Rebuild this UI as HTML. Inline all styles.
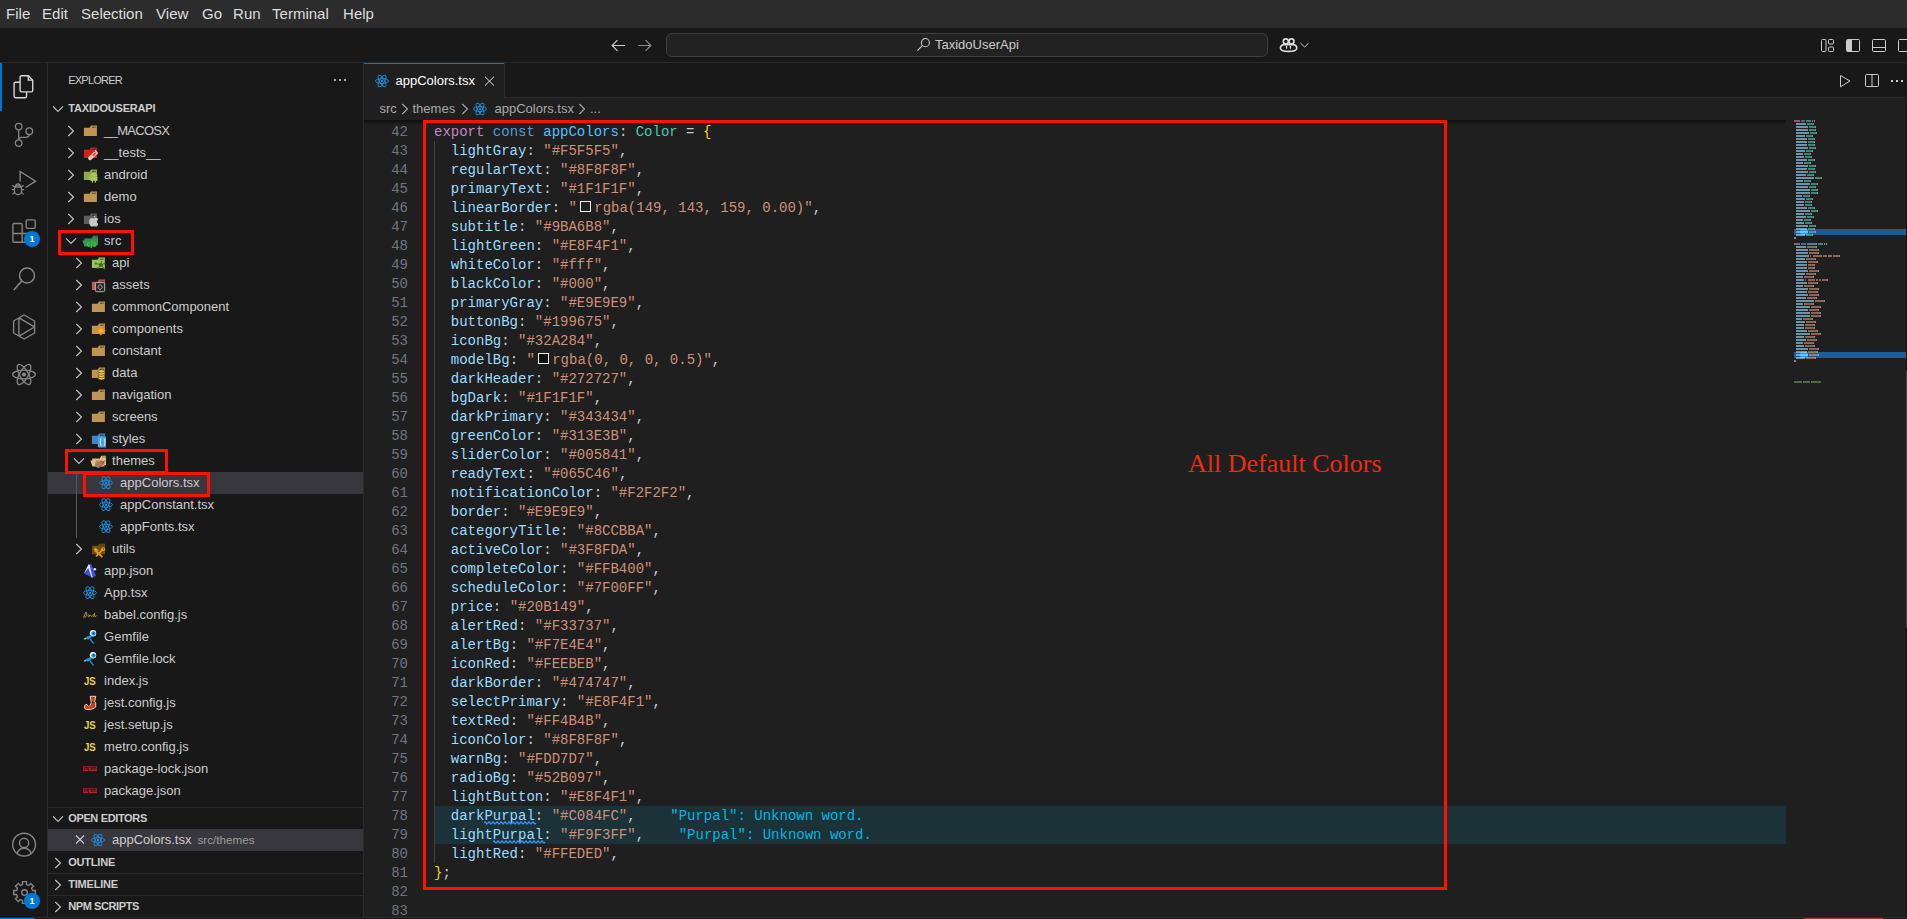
<!DOCTYPE html><html><head><meta charset="utf-8"><style>
html,body{margin:0;padding:0;width:1907px;height:919px;overflow:hidden;background:#181818;position:relative}
div,span{box-sizing:content-box}
.menu{position:absolute;top:5px;font:14px/18px "Liberation Sans",sans-serif;color:#dcdcdc;white-space:pre}
.ui{position:absolute;font-family:"Liberation Sans",sans-serif;line-height:18px;white-space:pre}
.b{font-weight:bold}
.rb{position:absolute;border:3px solid #ff1100}
.ln{position:absolute;left:364px;width:44px;text-align:right;font:14px/19px "Liberation Mono",monospace;color:#6e7681}
.code{position:absolute;left:434px;font:14px/19px "Liberation Mono",monospace;white-space:pre;color:#cccccc}
.sw{display:inline-block;box-sizing:border-box;width:11.2px;height:11.2px;border:1.4px solid #eeeeee;margin:0 3.4px 0 2.8px;vertical-align:0px}
</style></head><body><div style="position:absolute;left:0;top:0;width:1907px;height:28px;background:#2c2c2c"></div><div style="position:absolute;left:6.1px;top:3.70px;font:normal 15px/20px 'Liberation Sans',sans-serif;color:#dedede;letter-spacing:0px;white-space:pre;">File</div><div style="position:absolute;left:42.1px;top:3.70px;font:normal 15px/20px 'Liberation Sans',sans-serif;color:#dedede;letter-spacing:0px;white-space:pre;">Edit</div><div style="position:absolute;left:81.1px;top:3.70px;font:normal 15px/20px 'Liberation Sans',sans-serif;color:#dedede;letter-spacing:0px;white-space:pre;">Selection</div><div style="position:absolute;left:156.1px;top:3.70px;font:normal 15px/20px 'Liberation Sans',sans-serif;color:#dedede;letter-spacing:0px;white-space:pre;">View</div><div style="position:absolute;left:202.1px;top:3.70px;font:normal 15px/20px 'Liberation Sans',sans-serif;color:#dedede;letter-spacing:0px;white-space:pre;">Go</div><div style="position:absolute;left:233.1px;top:3.70px;font:normal 15px/20px 'Liberation Sans',sans-serif;color:#dedede;letter-spacing:0px;white-space:pre;">Run</div><div style="position:absolute;left:272.1px;top:3.70px;font:normal 15px/20px 'Liberation Sans',sans-serif;color:#dedede;letter-spacing:0px;white-space:pre;">Terminal</div><div style="position:absolute;left:343.1px;top:3.70px;font:normal 15px/20px 'Liberation Sans',sans-serif;color:#dedede;letter-spacing:0px;white-space:pre;">Help</div><div style="position:absolute;left:0;top:28px;width:1907px;height:34px;background:#181818;border-bottom:1px solid #2b2b2b"></div><svg style="position:absolute;left:610px;top:37px" width="17" height="17" viewBox="0 0 16 16"><path d="M2 8H14M7 3L2 8L7 13" fill="none" stroke="#cccccc" stroke-width="1.1"/></svg><svg style="position:absolute;left:636px;top:37px" width="17" height="17" viewBox="0 0 16 16"><path d="M2 8H14M9 3L14 8L9 13" fill="none" stroke="#8a8a8a" stroke-width="1.1"/></svg><div style="position:absolute;left:666px;top:33px;width:600px;height:22px;border:1px solid #3f3f3f;border-radius:6px;background:#222222"></div><svg style="position:absolute;left:916px;top:37px" width="15" height="15" viewBox="0 0 16 16"><circle cx="10" cy="6" r="4.3" fill="none" stroke="#cccccc" stroke-width="1.1"/><path d="M7 9L1.5 14.5" stroke="#cccccc" stroke-width="1.2"/></svg><div style="position:absolute;left:935px;top:34.99px;font:normal 13px/20px 'Liberation Sans',sans-serif;color:#cccccc;letter-spacing:0px;white-space:pre;">TaxidoUserApi</div><svg style="position:absolute;left:1279px;top:36px" width="19" height="17" viewBox="0 0 19 17"><circle cx="6.8" cy="5.4" r="2.5" fill="none" stroke="#dddddd" stroke-width="1.6"/><circle cx="12.5" cy="5.4" r="2.5" fill="none" stroke="#dddddd" stroke-width="1.6"/><path d="M4.2 8.8H15C16.7 9.3 17.8 10.5 17.8 12C17.8 14.5 14.2 15.4 9.6 15.4C5 15.4 1.4 14.5 1.4 12C1.4 10.5 2.5 9.3 4.2 8.8Z" fill="none" stroke="#dddddd" stroke-width="1.6"/><rect x="6.9" y="9.9" width="1.3" height="2.8" fill="#dddddd"/><rect x="10.8" y="9.9" width="1.3" height="2.8" fill="#dddddd"/></svg><svg style="position:absolute;left:1299px;top:40px" width="11" height="10" viewBox="0 0 11 10"><path d="M1.6 3.2L5.6 7L9.5 3.2" fill="none" stroke="#cccccc" stroke-width="1"/></svg><svg style="position:absolute;left:1820px;top:38px" width="15" height="14" viewBox="0 0 15 14"><rect x="1.5" y="1.5" width="4.5" height="12" rx="1" fill="none" stroke="#cccccc" stroke-width="1"/><rect x="8.5" y="1.5" width="5" height="4.5" rx="1" fill="none" stroke="#cccccc" stroke-width="1"/><rect x="8.5" y="9" width="5" height="4.5" rx="1" fill="none" stroke="#cccccc" stroke-width="1"/></svg><svg style="position:absolute;left:1845px;top:38px" width="16" height="14" viewBox="0 0 16 14"><rect x="1.5" y="1.5" width="13" height="12" rx="1" fill="none" stroke="#cccccc" stroke-width="1"/><path d="M2 2H7V13H2Z" fill="#cccccc"/></svg><svg style="position:absolute;left:1871px;top:38px" width="16" height="14" viewBox="0 0 16 14"><rect x="1.5" y="1.5" width="13" height="12" rx="1" fill="none" stroke="#cccccc" stroke-width="1"/><path d="M2 9.5H14" stroke="#cccccc" stroke-width="1"/></svg><svg style="position:absolute;left:1897px;top:38px" width="16" height="14" viewBox="0 0 16 14"><rect x="1.5" y="1.5" width="13" height="12" rx="1" fill="none" stroke="#cccccc" stroke-width="1"/><path d="M10.5 2V13" stroke="#cccccc" stroke-width="1"/></svg><div style="position:absolute;left:0;top:63px;width:47px;height:856px;background:#181818;border-right:1px solid #2b2b2b"></div><div style="position:absolute;left:0;top:63px;width:2px;height:48px;background:#0078d4"></div><svg style="position:absolute;left:12px;top:75px" width="24" height="25" viewBox="0 0 24 25"><path d="M9.5 0.8H16.3L20.7 5.2V15.5Q20.7 16.9 19.3 16.9H9.5Q8.1 16.9 8.1 15.5V2.2Q8.1 0.8 9.5 0.8Z" fill="none" stroke="#d7d7d7" stroke-width="1.4"/><path d="M16.3 0.8V5.2H20.7" fill="none" stroke="#d7d7d7" stroke-width="1.3"/><path d="M8.1 7.2H3.5Q2.1 7.2 2.1 8.6V21.3Q2.1 22.7 3.5 22.7H13.2Q14.6 22.7 14.6 21.3V16.9" fill="none" stroke="#d7d7d7" stroke-width="1.4"/></svg><svg style="position:absolute;left:13px;top:118px" width="22" height="30" viewBox="0 0 22 30"><circle cx="5.67" cy="8.6" r="3.3" fill="none" stroke="#868686" stroke-width="1.3"/><circle cx="5.67" cy="25.1" r="3.3" fill="none" stroke="#868686" stroke-width="1.3"/><circle cx="16.3" cy="13.2" r="3.3" fill="none" stroke="#868686" stroke-width="1.3"/><path d="M5.67 11.9V21.8M16.3 16.5C16.3 18.5 15 19.3 12.5 19.3H8.5C6.5 19.3 5.67 20.5 5.67 22" fill="none" stroke="#868686" stroke-width="1.3"/></svg><svg style="position:absolute;left:11px;top:170px" width="27" height="27" viewBox="0 0 27 27"><path d="M9.1 11.6V1.4L24.6 11.2L14.6 17.5" fill="none" stroke="#868686" stroke-width="1.4" stroke-linejoin="miter"/><ellipse cx="7" cy="20.2" rx="3.6" ry="4.5" fill="none" stroke="#868686" stroke-width="1.3"/><path d="M4.2 17.1Q4.6 13.8 7 13.8Q9.4 13.8 9.8 17.1M3.6 17.1H10.4M1.5 15.3L3.7 17.3M12.5 15.3L10.3 17.3M0.8 19.7H3.3M13.2 19.7H10.7M1.5 24.3L3.7 22.6M12.5 24.3L10.3 22.6" fill="none" stroke="#868686" stroke-width="1.3"/></svg><svg style="position:absolute;left:11px;top:218px" width="26" height="26" viewBox="0 0 26 26"><path d="M11.2 24.2V6.8Q11.2 5.5 9.9 5.5H3.2Q1.9 5.5 1.9 6.8V22.9Q1.9 24.2 3.2 24.2H19V15.5H1.9" fill="none" stroke="#868686" stroke-width="1.35"/><rect x="15.2" y="1.8" width="9" height="8.6" rx="1.4" fill="none" stroke="#868686" stroke-width="1.35"/></svg><div style="position:absolute;left:24px;top:231px;width:16px;height:16px;border-radius:8px;background:#0078d4;color:#fff;font:bold 9px/16px 'Liberation Sans',sans-serif;text-align:center">1</div><svg style="position:absolute;left:12px;top:266px" width="25" height="26" viewBox="0 0 25 26"><circle cx="15" cy="9.5" r="7.5" fill="none" stroke="#868686" stroke-width="1.5"/><path d="M9.8 15L1.8 24" stroke="#868686" stroke-width="1.6"/></svg><svg style="position:absolute;left:12px;top:314px" width="25" height="27" viewBox="0 0 25 27"><path d="M12.1 1L22.6 7V19L12.1 25L1.6 19V7Z" fill="none" stroke="#868686" stroke-width="1.35" stroke-linejoin="round"/><path d="M6.9 3.9V22.1M6.9 3.9L22.5 12.8M7.5 21.8L22.5 13" fill="none" stroke="#868686" stroke-width="1.35"/></svg><svg style="position:absolute;left:11px;top:362px" width="26" height="25" viewBox="-13 -12.5 26 25"><g fill="none" stroke="#868686" stroke-width="1.25"><ellipse rx="11.4" ry="4.3"/><ellipse rx="11.4" ry="4.3" transform="rotate(60)"/><ellipse rx="11.4" ry="4.3" transform="rotate(120)"/></g><circle r="2.1" fill="#868686"/></svg><svg style="position:absolute;left:11px;top:832px" width="26" height="26" viewBox="0 0 26 26"><circle cx="13.1" cy="12.6" r="11.4" fill="none" stroke="#868686" stroke-width="1.4"/><circle cx="13.1" cy="10.9" r="4.6" fill="none" stroke="#868686" stroke-width="1.4"/><path d="M5.9 21.5C7.2 17.8 9.8 16.2 13.1 16.2C16.4 16.2 19 17.8 20.3 21.5" fill="none" stroke="#868686" stroke-width="1.4"/></svg><svg style="position:absolute;left:11.6px;top:880.2px" width="25" height="25" viewBox="0 0 25 25"><path d="M10.52 4.54 L10.50 1.68 L14.50 1.68 L14.48 4.54 L16.72 5.47 L18.73 3.43 L21.57 6.27 L19.53 8.28 L20.46 10.52 L23.32 10.50 L23.32 14.50 L20.46 14.48 L19.53 16.72 L21.57 18.73 L18.73 21.57 L16.72 19.53 L14.48 20.46 L14.50 23.32 L10.50 23.32 L10.52 20.46 L8.28 19.53 L6.27 21.57 L3.43 18.73 L5.47 16.72 L4.54 14.48 L1.68 14.50 L1.68 10.50 L4.54 10.52 L5.47 8.28 L3.43 6.27 L6.27 3.43 L8.28 5.47Z" fill="none" stroke="#868686" stroke-width="1.35" stroke-linejoin="miter"/><circle cx="12.5" cy="12.5" r="2.8" fill="none" stroke="#868686" stroke-width="1.35"/></svg><div style="position:absolute;left:24px;top:893px;width:16px;height:16px;border-radius:8px;background:#0078d4;color:#fff;font:bold 9px/16px 'Liberation Sans',sans-serif;text-align:center">1</div><div style="position:absolute;left:48px;top:63px;width:315px;height:856px;background:#181818;border-right:1px solid #2b2b2b"></div><div style="position:absolute;left:68.3px;top:70.19px;font:normal 11px/20px 'Liberation Sans',sans-serif;color:#cccccc;letter-spacing:-0.8px;white-space:pre;">EXPLORER</div><svg style="position:absolute;left:332px;top:75px" width="16" height="10" viewBox="0 0 16 10"><circle cx="3" cy="5" r="1.1" fill="#cccccc"/><circle cx="8" cy="5" r="1.1" fill="#cccccc"/><circle cx="13" cy="5" r="1.1" fill="#cccccc"/></svg><svg style="position:absolute;left:50px;top:101.3px" width="16" height="16" viewBox="0 0 16 16"><path d="M3 5.4L8 10.4L13 5.4" fill="none" stroke="#c5c5c5" stroke-width="1.1"/></svg><div style="position:absolute;left:68.3px;top:98.19px;font:bold 11px/20px 'Liberation Sans',sans-serif;color:#cccccc;letter-spacing:-0.2px;white-space:pre;">TAXIDOUSERAPI</div><svg style="position:absolute;left:63.3px;top:123px" width="16" height="16" viewBox="0 0 16 16"><path d="M5.3 3L10.5 8L5.3 13" fill="none" stroke="#c5c5c5" stroke-width="1.1"/></svg><div style="position:absolute;left:82px;top:122px;width:16px;height:16px"><svg width="16" height="18" viewBox="0 0 16 18" style="position:absolute;left:0;top:0"><g transform="translate(1.9,1.6)"><path d="M0 4.25H5.7L7.1 2H13V12.5H0Z" fill="#c09553"/><rect x="8" y="3.1" width="4" height="1.1" fill="#1a1a1a" opacity=".55"/></g></svg></div><div style="position:absolute;left:104.1px;top:121.09px;font:normal 13px/20px 'Liberation Sans',sans-serif;color:#cccccc;letter-spacing:-0.7px;white-space:pre;">__MACOSX</div><svg style="position:absolute;left:63.3px;top:145px" width="16" height="16" viewBox="0 0 16 16"><path d="M5.3 3L10.5 8L5.3 13" fill="none" stroke="#c5c5c5" stroke-width="1.1"/></svg><div style="position:absolute;left:82px;top:144px;width:16px;height:16px"><svg width="16" height="18" viewBox="0 0 16 18" style="position:absolute;left:0;top:0"><g transform="translate(1.9,1.6)"><path d="M0 4.25H5.7L7.1 2H13V12.5H0Z" fill="#c4291c"/><rect x="8" y="3.1" width="4" height="1.1" fill="#1a1a1a" opacity=".55"/><g transform="rotate(-42 8.6 10.2)"><rect x="3.2" y="8.4" width="11" height="3.8" rx="1.9" fill="#f5c4c4"/><rect x="9" y="9.4" width="4" height="1.8" fill="#d84a3a"/><rect x="13.6" y="7.8" width="1.2" height="5" fill="#f5c4c4"/></g></g></svg></div><div style="position:absolute;left:104.1px;top:143.09px;font:normal 13px/20px 'Liberation Sans',sans-serif;color:#cccccc;letter-spacing:0px;white-space:pre;">__tests__</div><svg style="position:absolute;left:63.3px;top:167px" width="16" height="16" viewBox="0 0 16 16"><path d="M5.3 3L10.5 8L5.3 13" fill="none" stroke="#c5c5c5" stroke-width="1.1"/></svg><div style="position:absolute;left:82px;top:166px;width:16px;height:16px"><svg width="16" height="18" viewBox="0 0 16 18" style="position:absolute;left:0;top:0"><g transform="translate(1.9,1.6)"><path d="M0 4.25H5.7L7.1 2H13V12.5H0Z" fill="#93ab4c"/><rect x="8" y="3.1" width="4" height="1.1" fill="#1a1a1a" opacity=".55"/><path d="M6.5 8.6A3.5 3.5 0 0 1 13.5 8.6Z" fill="#aac65e"/><rect x="6.5" y="9.1" width="7" height="4.2" fill="#aac65e"/><rect x="5" y="9.1" width="1.1" height="3.2" rx=".5" fill="#aac65e"/><rect x="13.9" y="9.1" width="1.1" height="3.2" rx=".5" fill="#aac65e"/><rect x="7.9" y="13" width="1.3" height="2" fill="#aac65e"/><rect x="10.8" y="13" width="1.3" height="2" fill="#aac65e"/></g></svg></div><div style="position:absolute;left:104.1px;top:165.09px;font:normal 13px/20px 'Liberation Sans',sans-serif;color:#cccccc;letter-spacing:0px;white-space:pre;">android</div><svg style="position:absolute;left:63.3px;top:189px" width="16" height="16" viewBox="0 0 16 16"><path d="M5.3 3L10.5 8L5.3 13" fill="none" stroke="#c5c5c5" stroke-width="1.1"/></svg><div style="position:absolute;left:82px;top:188px;width:16px;height:16px"><svg width="16" height="18" viewBox="0 0 16 18" style="position:absolute;left:0;top:0"><g transform="translate(1.9,1.6)"><path d="M0 4.25H5.7L7.1 2H13V12.5H0Z" fill="#c09553"/><rect x="8" y="3.1" width="4" height="1.1" fill="#1a1a1a" opacity=".55"/></g></svg></div><div style="position:absolute;left:104.1px;top:187.09px;font:normal 13px/20px 'Liberation Sans',sans-serif;color:#cccccc;letter-spacing:0px;white-space:pre;">demo</div><svg style="position:absolute;left:63.3px;top:211px" width="16" height="16" viewBox="0 0 16 16"><path d="M5.3 3L10.5 8L5.3 13" fill="none" stroke="#c5c5c5" stroke-width="1.1"/></svg><div style="position:absolute;left:82px;top:210px;width:16px;height:16px"><svg width="16" height="18" viewBox="0 0 16 18" style="position:absolute;left:0;top:0"><g transform="translate(1.9,1.6)"><path d="M0 4.25H5.7L7.1 2H13V12.5H0Z" fill="#5e5e5e"/><rect x="8" y="3.1" width="4" height="1.1" fill="#1a1a1a" opacity=".55"/><path d="M9.6 6.8C10.5 6.8 11 6.2 12 6.2C13.2 6.2 14 7 14.3 7.8C13.2 8.4 12.8 9.4 13 10.5C13.2 11.5 13.8 12 14.4 12.3C14 13.5 13 15 12 15C11.2 15 10.8 14.6 10 14.6C9.2 14.6 8.7 15 8 15C6.8 15 5.2 12.5 5.2 10.3C5.2 8 6.5 6.5 8 6.5C8.7 6.5 9.1 6.8 9.6 6.8Z" fill="#c9c9c9"/><path d="M9.8 6.2C9.8 5 10.6 4.2 11.6 4C11.6 5.2 10.8 6 9.8 6.2Z" fill="#c9c9c9"/></g></svg></div><div style="position:absolute;left:104.1px;top:209.09px;font:normal 13px/20px 'Liberation Sans',sans-serif;color:#cccccc;letter-spacing:0px;white-space:pre;">ios</div><svg style="position:absolute;left:62.900000000000006px;top:233.2px" width="16" height="16" viewBox="0 0 16 16"><path d="M3 5.4L8 10.4L13 5.4" fill="none" stroke="#c5c5c5" stroke-width="1.1"/></svg><div style="position:absolute;left:82px;top:232px;width:16px;height:16px"><svg width="16" height="18" viewBox="0 0 16 18"><path d="M2.3 6.6H9.8L11.2 3.8H17V13H2.3Z" fill="#3b8f4e"/><rect x="12.2" y="4.6" width="3.7" height="0.9" fill="#1a1a1a" opacity=".5"/><path d="M0.3 8.5H15.5L14.3 14.6H2.5Z" fill="#3d9552"/><path d="M7.2 10.2L4.9 12.5L7.2 14.8M11.8 10.2L14 12.5L11.8 14.8M10 8.8L9.1 16.2" fill="none" stroke="#33c533" stroke-width="1.3"/></svg></div><div style="position:absolute;left:104.1px;top:231.09px;font:normal 13px/20px 'Liberation Sans',sans-serif;color:#cccccc;letter-spacing:0px;white-space:pre;">src</div><svg style="position:absolute;left:71.3px;top:255px" width="16" height="16" viewBox="0 0 16 16"><path d="M5.3 3L10.5 8L5.3 13" fill="none" stroke="#c5c5c5" stroke-width="1.1"/></svg><div style="position:absolute;left:90px;top:254px;width:16px;height:16px"><svg width="16" height="18" viewBox="0 0 16 18" style="position:absolute;left:0;top:0"><g transform="translate(1.9,1.6)"><path d="M0 4.25H5.7L7.1 2H13V12.5H0Z" fill="#9dbf5f"/><rect x="8" y="3.1" width="4" height="1.1" fill="#1a1a1a" opacity=".55"/><path d="M9 9.3L3.8 7.9M9 9.3L9.5 5.3M9 9.3L12.8 7.9M9 9.3L12.4 13.1M9 9.3L6.1 12.7" stroke="#3f6e1a" stroke-width="0.9"/><circle cx="9" cy="9.3" r="2" fill="#3f6e1a"/><circle cx="3.8" cy="7.9" r="1" fill="#3f6e1a"/><circle cx="12.8" cy="7.9" r="0.9" fill="#3f6e1a"/><circle cx="12.4" cy="13.1" r="1.1" fill="#3f6e1a"/><circle cx="6.1" cy="12.7" r="0.9" fill="#3f6e1a"/></g></svg></div><div style="position:absolute;left:112.1px;top:253.09px;font:normal 13px/20px 'Liberation Sans',sans-serif;color:#cccccc;letter-spacing:0px;white-space:pre;">api</div><svg style="position:absolute;left:71.3px;top:277px" width="16" height="16" viewBox="0 0 16 16"><path d="M5.3 3L10.5 8L5.3 13" fill="none" stroke="#c5c5c5" stroke-width="1.1"/></svg><div style="position:absolute;left:90px;top:276px;width:16px;height:16px"><svg width="16" height="18" viewBox="0 0 16 18" style="position:absolute;left:0;top:0"><g transform="translate(1.9,1.6)"><path d="M0 4.25H5.7L7.1 2H13V12.5H0Z" fill="#c25a5a"/><rect x="8" y="3.1" width="4" height="1.1" fill="#1a1a1a" opacity=".55"/><rect x="3.5" y="5" width="9.3" height="9.1" rx="1.2" fill="#2b2b2b" stroke="#bdbdbd" stroke-width="0.9"/><path d="M8.2 6.8L10.6 9.5L8.2 12.2L5.8 9.5Z" fill="none" stroke="#bdbdbd" stroke-width="0.8"/></g></svg></div><div style="position:absolute;left:112.1px;top:275.09px;font:normal 13px/20px 'Liberation Sans',sans-serif;color:#cccccc;letter-spacing:0px;white-space:pre;">assets</div><svg style="position:absolute;left:71.3px;top:299px" width="16" height="16" viewBox="0 0 16 16"><path d="M5.3 3L10.5 8L5.3 13" fill="none" stroke="#c5c5c5" stroke-width="1.1"/></svg><div style="position:absolute;left:90px;top:298px;width:16px;height:16px"><svg width="16" height="18" viewBox="0 0 16 18" style="position:absolute;left:0;top:0"><g transform="translate(1.9,1.6)"><path d="M0 4.25H5.7L7.1 2H13V12.5H0Z" fill="#c09553"/><rect x="8" y="3.1" width="4" height="1.1" fill="#1a1a1a" opacity=".55"/></g></svg></div><div style="position:absolute;left:112.1px;top:297.09px;font:normal 13px/20px 'Liberation Sans',sans-serif;color:#cccccc;letter-spacing:0px;white-space:pre;">commonComponent</div><svg style="position:absolute;left:71.3px;top:321px" width="16" height="16" viewBox="0 0 16 16"><path d="M5.3 3L10.5 8L5.3 13" fill="none" stroke="#c5c5c5" stroke-width="1.1"/></svg><div style="position:absolute;left:90px;top:320px;width:16px;height:16px"><svg width="16" height="18" viewBox="0 0 16 18" style="position:absolute;left:0;top:0"><g transform="translate(1.9,1.6)"><path d="M0 4.25H5.7L7.1 2H13V12.5H0Z" fill="#c09553"/><rect x="8" y="3.1" width="4" height="1.1" fill="#1a1a1a" opacity=".55"/><path d="M9 4.5L13.8 9.2L9 14L4.2 9.2Z" fill="#f0891e"/><path d="M9 6.5L11.7 9.2L9 11.9L6.3 9.2Z" fill="#f9b53a"/></g></svg></div><div style="position:absolute;left:112.1px;top:319.09px;font:normal 13px/20px 'Liberation Sans',sans-serif;color:#cccccc;letter-spacing:0px;white-space:pre;">components</div><svg style="position:absolute;left:71.3px;top:343px" width="16" height="16" viewBox="0 0 16 16"><path d="M5.3 3L10.5 8L5.3 13" fill="none" stroke="#c5c5c5" stroke-width="1.1"/></svg><div style="position:absolute;left:90px;top:342px;width:16px;height:16px"><svg width="16" height="18" viewBox="0 0 16 18" style="position:absolute;left:0;top:0"><g transform="translate(1.9,1.6)"><path d="M0 4.25H5.7L7.1 2H13V12.5H0Z" fill="#c09553"/><rect x="8" y="3.1" width="4" height="1.1" fill="#1a1a1a" opacity=".55"/></g></svg></div><div style="position:absolute;left:112.1px;top:341.09px;font:normal 13px/20px 'Liberation Sans',sans-serif;color:#cccccc;letter-spacing:0px;white-space:pre;">constant</div><svg style="position:absolute;left:71.3px;top:365px" width="16" height="16" viewBox="0 0 16 16"><path d="M5.3 3L10.5 8L5.3 13" fill="none" stroke="#c5c5c5" stroke-width="1.1"/></svg><div style="position:absolute;left:90px;top:364px;width:16px;height:16px"><svg width="16" height="18" viewBox="0 0 16 18" style="position:absolute;left:0;top:0"><g transform="translate(1.9,1.6)"><path d="M0 4.25H5.7L7.1 2H13V12.5H0Z" fill="#c09553"/><rect x="8" y="3.1" width="4" height="1.1" fill="#1a1a1a" opacity=".55"/><g fill="#f0cf50" stroke="#1a1a1a" stroke-width="0.5"><ellipse cx="9.6" cy="12.6" rx="3.3" ry="1.7"/><ellipse cx="9.6" cy="10.3" rx="3.3" ry="1.7"/><ellipse cx="9.6" cy="8" rx="3.3" ry="1.7"/><ellipse cx="9.6" cy="5.7" rx="3.3" ry="1.6"/></g></g></svg></div><div style="position:absolute;left:112.1px;top:363.09px;font:normal 13px/20px 'Liberation Sans',sans-serif;color:#cccccc;letter-spacing:0px;white-space:pre;">data</div><svg style="position:absolute;left:71.3px;top:387px" width="16" height="16" viewBox="0 0 16 16"><path d="M5.3 3L10.5 8L5.3 13" fill="none" stroke="#c5c5c5" stroke-width="1.1"/></svg><div style="position:absolute;left:90px;top:386px;width:16px;height:16px"><svg width="16" height="18" viewBox="0 0 16 18" style="position:absolute;left:0;top:0"><g transform="translate(1.9,1.6)"><path d="M0 4.25H5.7L7.1 2H13V12.5H0Z" fill="#c09553"/><rect x="8" y="3.1" width="4" height="1.1" fill="#1a1a1a" opacity=".55"/></g></svg></div><div style="position:absolute;left:112.1px;top:385.09px;font:normal 13px/20px 'Liberation Sans',sans-serif;color:#cccccc;letter-spacing:0px;white-space:pre;">navigation</div><svg style="position:absolute;left:71.3px;top:409px" width="16" height="16" viewBox="0 0 16 16"><path d="M5.3 3L10.5 8L5.3 13" fill="none" stroke="#c5c5c5" stroke-width="1.1"/></svg><div style="position:absolute;left:90px;top:408px;width:16px;height:16px"><svg width="16" height="18" viewBox="0 0 16 18" style="position:absolute;left:0;top:0"><g transform="translate(1.9,1.6)"><path d="M0 4.25H5.7L7.1 2H13V12.5H0Z" fill="#c09553"/><rect x="8" y="3.1" width="4" height="1.1" fill="#1a1a1a" opacity=".55"/></g></svg></div><div style="position:absolute;left:112.1px;top:407.09px;font:normal 13px/20px 'Liberation Sans',sans-serif;color:#cccccc;letter-spacing:0px;white-space:pre;">screens</div><svg style="position:absolute;left:71.3px;top:431px" width="16" height="16" viewBox="0 0 16 16"><path d="M5.3 3L10.5 8L5.3 13" fill="none" stroke="#c5c5c5" stroke-width="1.1"/></svg><div style="position:absolute;left:90px;top:430px;width:16px;height:16px"><svg width="16" height="18" viewBox="0 0 16 18" style="position:absolute;left:0;top:0"><g transform="translate(1.9,1.6)"><path d="M0 4.25H5.7L7.1 2H13V12.5H0Z" fill="#3f87c6"/><rect x="8" y="3.1" width="4" height="1.1" fill="#1a1a1a" opacity=".55"/><rect x="6" y="5" width="9.5" height="11" rx="1" fill="#4ea0e6"/><path d="M9.5 7C8.5 7 8.7 8 8.7 9C8.7 10 8 10.5 8 10.5C8 10.5 8.7 11 8.7 12C8.7 13 8.5 14 9.5 14M12 7C13 7 12.8 8 12.8 9C12.8 10 13.5 10.5 13.5 10.5C13.5 10.5 12.8 11 12.8 12C12.8 13 13 14 12 14" stroke="#ffffff" stroke-width="0.9" fill="none"/></g></svg></div><div style="position:absolute;left:112.1px;top:429.09px;font:normal 13px/20px 'Liberation Sans',sans-serif;color:#cccccc;letter-spacing:0px;white-space:pre;">styles</div><svg style="position:absolute;left:70.9px;top:453.2px" width="16" height="16" viewBox="0 0 16 16"><path d="M3 5.4L8 10.4L13 5.4" fill="none" stroke="#c5c5c5" stroke-width="1.1"/></svg><div style="position:absolute;left:90px;top:452px;width:16px;height:16px"><svg width="16" height="18" viewBox="0 0 16 18"><path d="M2.3 6.6H9.8L11.2 3.8H17V13H2.3Z" fill="#e2b888"/><rect x="12.2" y="4.6" width="3.7" height="0.9" fill="#1a1a1a" opacity=".5"/><path d="M0.3 8.5H15.5L14.3 14.6H2.5Z" fill="#e6bd8c"/><path d="M5.5 10C5.5 8.8 7 8.5 9 8.5C12 8.5 14.5 9 14.5 11C14.5 13.5 12 14.3 10.5 14.3L9.5 16L7 15.5L5 14Z" fill="#b87850"/><circle cx="6.5" cy="11.2" r="0.9" fill="#55c34a"/><circle cx="6.5" cy="13.2" r="0.9" fill="#3b8be0"/><circle cx="8" cy="9.5" r="0.8" fill="#d9a73a"/><circle cx="11.3" cy="9.6" r="0.8" fill="#d94a2a"/><circle cx="9.8" cy="15" r="0.8" fill="#3030e0"/><path d="M12 11.5L15 8.5" stroke="#2a3f5f" stroke-width="1"/></svg></div><div style="position:absolute;left:112.1px;top:451.09px;font:normal 13px/20px 'Liberation Sans',sans-serif;color:#cccccc;letter-spacing:0px;white-space:pre;">themes</div><div style="position:absolute;left:48px;top:472px;width:315px;height:22px;background:#37373d"></div><div style="position:absolute;left:98px;top:474px;width:16px;height:16px"><svg width="16" height="16" viewBox="-8 -8.7 16 16"><g fill="none" stroke="#2386d0" stroke-width="1"><ellipse rx="6.5" ry="2.45"/><ellipse rx="6.5" ry="2.45" transform="rotate(60)"/><ellipse rx="6.5" ry="2.45" transform="rotate(120)"/></g><circle r="1.3" fill="#2386d0"/></svg></div><div style="position:absolute;left:120.1px;top:473.09px;font:normal 13px/20px 'Liberation Sans',sans-serif;color:#cccccc;letter-spacing:0px;white-space:pre;">appColors.tsx</div><div style="position:absolute;left:98px;top:496px;width:16px;height:16px"><svg width="16" height="16" viewBox="-8 -8.7 16 16"><g fill="none" stroke="#2386d0" stroke-width="1"><ellipse rx="6.5" ry="2.45"/><ellipse rx="6.5" ry="2.45" transform="rotate(60)"/><ellipse rx="6.5" ry="2.45" transform="rotate(120)"/></g><circle r="1.3" fill="#2386d0"/></svg></div><div style="position:absolute;left:120.1px;top:495.09px;font:normal 13px/20px 'Liberation Sans',sans-serif;color:#cccccc;letter-spacing:0px;white-space:pre;">appConstant.tsx</div><div style="position:absolute;left:98px;top:518px;width:16px;height:16px"><svg width="16" height="16" viewBox="-8 -8.7 16 16"><g fill="none" stroke="#2386d0" stroke-width="1"><ellipse rx="6.5" ry="2.45"/><ellipse rx="6.5" ry="2.45" transform="rotate(60)"/><ellipse rx="6.5" ry="2.45" transform="rotate(120)"/></g><circle r="1.3" fill="#2386d0"/></svg></div><div style="position:absolute;left:120.1px;top:517.09px;font:normal 13px/20px 'Liberation Sans',sans-serif;color:#cccccc;letter-spacing:0px;white-space:pre;">appFonts.tsx</div><svg style="position:absolute;left:71.3px;top:541px" width="16" height="16" viewBox="0 0 16 16"><path d="M5.3 3L10.5 8L5.3 13" fill="none" stroke="#c5c5c5" stroke-width="1.1"/></svg><div style="position:absolute;left:90px;top:540px;width:16px;height:16px"><svg width="16" height="18" viewBox="0 0 16 18"><path d="M2 5.8H7.8L9.2 3.8H15V14.3H2Z" fill="#6b4f12"/><rect x="10.2" y="4.7" width="3.8" height="0.9" fill="#1a1a1a" opacity=".5"/><path d="M5 10.5L12.5 17M12.8 9.3L6 16.5" stroke="#e8961e" stroke-width="1.8"/><circle cx="13.2" cy="9.2" r="2" fill="#e8961e"/><circle cx="13.5" cy="9" r="0.8" fill="#6b4f12"/><rect x="4" y="8.5" width="4" height="3" transform="rotate(40 6 10)" fill="#e8961e"/></svg></div><div style="position:absolute;left:112.1px;top:539.09px;font:normal 13px/20px 'Liberation Sans',sans-serif;color:#cccccc;letter-spacing:0px;white-space:pre;">utils</div><div style="position:absolute;left:82px;top:562px;width:16px;height:16px"><svg width="16" height="16" viewBox="0 0 16 16"><path d="M2 11.5L6.6 2.3L9.2 2L14 13.6L10.6 15.8Z" fill="#3d4fe0"/><path d="M2 11.5L6.6 2.3L7.8 3.5L10.6 15.8L9.5 15.2L6.3 6Z" fill="#ffffff" opacity=".85"/><circle cx="12.8" cy="7.3" r="1.3" fill="#e8ecff"/></svg></div><div style="position:absolute;left:104.1px;top:561.09px;font:normal 13px/20px 'Liberation Sans',sans-serif;color:#cccccc;letter-spacing:0px;white-space:pre;">app.json</div><div style="position:absolute;left:82px;top:584px;width:16px;height:16px"><svg width="16" height="16" viewBox="-8 -8.7 16 16"><g fill="none" stroke="#2386d0" stroke-width="1"><ellipse rx="6.5" ry="2.45"/><ellipse rx="6.5" ry="2.45" transform="rotate(60)"/><ellipse rx="6.5" ry="2.45" transform="rotate(120)"/></g><circle r="1.3" fill="#2386d0"/></svg></div><div style="position:absolute;left:104.1px;top:583.09px;font:normal 13px/20px 'Liberation Sans',sans-serif;color:#cccccc;letter-spacing:0px;white-space:pre;">App.tsx</div><div style="position:absolute;left:82px;top:606px;width:16px;height:16px"><svg width="16" height="16" viewBox="0 0 16 16"><path d="M1.5 11.5C2.5 10 3 8 3.5 6.5M3.5 6.5C5 6 5.5 7.5 4 8.5C5.5 8.5 5 11 2.5 11.2M6 9.5C6.5 8.5 7.8 8.6 7.5 10C7.3 11 6.2 11 6.4 10M8.5 8.8C9 10.5 9.5 11 10.5 9.5M11 9C11.5 8.2 12.5 8.5 12 10C11.8 10.8 11 10.8 11.2 10M12.8 7C12.5 8.5 12.5 10 13.2 10.5C13.8 10.5 14.5 10 14.8 9.5" fill="none" stroke="#c9a640" stroke-width="0.9"/></svg></div><div style="position:absolute;left:104.1px;top:605.09px;font:normal 13px/20px 'Liberation Sans',sans-serif;color:#cccccc;letter-spacing:0px;white-space:pre;">babel.config.js</div><div style="position:absolute;left:82px;top:628px;width:16px;height:16px"><svg width="16" height="16" viewBox="0 0 16 16"><path d="M2 10.5L6 8L8.5 9.5L6.5 11.5Z" fill="#1b9bd7"/><path d="M1.5 10.8L4 10.3L3.2 11.8Z" fill="#ffffff"/><path d="M7.5 9.5L9 11L12.3 15.5L11 15.8L8 12Z" fill="#1b9bd7"/><circle cx="11" cy="5.3" r="3.2" fill="#ffffff"/><circle cx="11.5" cy="5.5" r="2.2" fill="#1b9bd7"/><circle cx="11.7" cy="5.2" r="1" fill="#0b5e8a"/><path d="M6 8.5L9 6.5L10 9L8.5 10Z" fill="#1b9bd7"/></svg></div><div style="position:absolute;left:104.1px;top:627.09px;font:normal 13px/20px 'Liberation Sans',sans-serif;color:#cccccc;letter-spacing:0px;white-space:pre;">Gemfile</div><div style="position:absolute;left:82px;top:650px;width:16px;height:16px"><svg width="16" height="16" viewBox="0 0 16 16"><path d="M2 10.5L6 8L8.5 9.5L6.5 11.5Z" fill="#1b9bd7"/><path d="M1.5 10.8L4 10.3L3.2 11.8Z" fill="#ffffff"/><path d="M7.5 9.5L9 11L12.3 15.5L11 15.8L8 12Z" fill="#1b9bd7"/><circle cx="11" cy="5.3" r="3.2" fill="#ffffff"/><circle cx="11.5" cy="5.5" r="2.2" fill="#1b9bd7"/><circle cx="11.7" cy="5.2" r="1" fill="#0b5e8a"/><path d="M6 8.5L9 6.5L10 9L8.5 10Z" fill="#1b9bd7"/></svg></div><div style="position:absolute;left:104.1px;top:649.09px;font:normal 13px/20px 'Liberation Sans',sans-serif;color:#cccccc;letter-spacing:0px;white-space:pre;">Gemfile.lock</div><div style="position:absolute;left:82px;top:672px;width:16px;height:16px"><svg width="16" height="16" viewBox="0 0 16 16"><text x="2" y="13.3" font-family="Liberation Sans" font-weight="bold" font-size="11.6" fill="#e8d44d" textLength="11.8" lengthAdjust="spacingAndGlyphs">JS</text></svg></div><div style="position:absolute;left:104.1px;top:671.09px;font:normal 13px/20px 'Liberation Sans',sans-serif;color:#cccccc;letter-spacing:0px;white-space:pre;">index.js</div><div style="position:absolute;left:82px;top:694px;width:16px;height:16px"><svg width="16" height="16" viewBox="0 0 16 16"><path d="M8.2 2.3H13.8L12.6 7.6L13.7 8.7V12.8Q13.3 14.4 9 15.3L5 15.4Q2.4 15.4 2.4 13Q2.4 11.2 3.7 10.5Q5.4 10.1 5.7 11.6Q6.1 12.6 7.8 11.9L9.3 8.6Z" fill="#c63d14" stroke="#f2e6e0" stroke-width="0.9"/><circle cx="10.6" cy="8.6" r="0.9" fill="#222"/><circle cx="6.8" cy="11.2" r="0.8" fill="#222"/></svg></div><div style="position:absolute;left:104.1px;top:693.09px;font:normal 13px/20px 'Liberation Sans',sans-serif;color:#cccccc;letter-spacing:0px;white-space:pre;">jest.config.js</div><div style="position:absolute;left:82px;top:716px;width:16px;height:16px"><svg width="16" height="16" viewBox="0 0 16 16"><text x="2" y="13.3" font-family="Liberation Sans" font-weight="bold" font-size="11.6" fill="#e8d44d" textLength="11.8" lengthAdjust="spacingAndGlyphs">JS</text></svg></div><div style="position:absolute;left:104.1px;top:715.09px;font:normal 13px/20px 'Liberation Sans',sans-serif;color:#cccccc;letter-spacing:0px;white-space:pre;">jest.setup.js</div><div style="position:absolute;left:82px;top:738px;width:16px;height:16px"><svg width="16" height="16" viewBox="0 0 16 16"><text x="2" y="13.3" font-family="Liberation Sans" font-weight="bold" font-size="11.6" fill="#e8d44d" textLength="11.8" lengthAdjust="spacingAndGlyphs">JS</text></svg></div><div style="position:absolute;left:104.1px;top:737.09px;font:normal 13px/20px 'Liberation Sans',sans-serif;color:#cccccc;letter-spacing:0px;white-space:pre;">metro.config.js</div><div style="position:absolute;left:82px;top:760px;width:16px;height:16px"><svg width="16" height="16" viewBox="0 0 16 16"><rect x="1.1" y="6.2" width="13.9" height="4.9" fill="#c12127"/><path d="M2.3 10.1V7.2H5.6V10.1M4 7.2V10.1M6.6 11.1V7.2H9.6V9.3H8.1M10.6 10.1V7.2H13.9V10.1M12.2 7.2V10.1" stroke="#1a1a1a" stroke-width="0.8" fill="none"/></svg></div><div style="position:absolute;left:104.1px;top:759.09px;font:normal 13px/20px 'Liberation Sans',sans-serif;color:#cccccc;letter-spacing:0px;white-space:pre;">package-lock.json</div><div style="position:absolute;left:82px;top:782px;width:16px;height:16px"><svg width="16" height="16" viewBox="0 0 16 16"><rect x="1.1" y="6.2" width="13.9" height="4.9" fill="#c12127"/><path d="M2.3 10.1V7.2H5.6V10.1M4 7.2V10.1M6.6 11.1V7.2H9.6V9.3H8.1M10.6 10.1V7.2H13.9V10.1M12.2 7.2V10.1" stroke="#1a1a1a" stroke-width="0.8" fill="none"/></svg></div><div style="position:absolute;left:104.1px;top:781.09px;font:normal 13px/20px 'Liberation Sans',sans-serif;color:#cccccc;letter-spacing:0px;white-space:pre;">package.json</div><div style="position:absolute;left:76px;top:472px;width:1px;height:66px;background:#585858"></div><div style="position:absolute;left:48px;top:807px;width:315px;height:1px;background:#2b2b2b"></div><svg style="position:absolute;left:50px;top:811.3px" width="16" height="16" viewBox="0 0 16 16"><path d="M3 5.4L8 10.4L13 5.4" fill="none" stroke="#c5c5c5" stroke-width="1.1"/></svg><div style="position:absolute;left:68.2px;top:807.99px;font:bold 11px/20px 'Liberation Sans',sans-serif;color:#cccccc;letter-spacing:-0.35px;white-space:pre;">OPEN EDITORS</div><div style="position:absolute;left:48px;top:829px;width:315px;height:22px;background:#37373d"></div><svg style="position:absolute;left:74px;top:832px" width="12" height="16" viewBox="0 0 12 16"><path d="M2 3.5L10 11.5M10 3.5L2 11.5" stroke="#cccccc" stroke-width="1.1"/></svg><svg style="position:absolute;left:90px;top:831.8px" width="16" height="16" viewBox="-8 -8 16 16"><g fill="none" stroke="#2386d0" stroke-width="1"><ellipse rx="6.5" ry="2.45"/><ellipse rx="6.5" ry="2.45" transform="rotate(60)"/><ellipse rx="6.5" ry="2.45" transform="rotate(120)"/></g><circle r="1.3" fill="#2386d0"/></svg><div style="position:absolute;left:112px;top:830.49px;font:normal 13px/20px 'Liberation Sans',sans-serif;color:#cccccc;letter-spacing:0px;white-space:pre;">appColors.tsx</div><div style="position:absolute;left:197.5px;top:829.94px;font:normal 11.7px/20px 'Liberation Sans',sans-serif;color:#9d9d9d;letter-spacing:0px;white-space:pre;">src/themes</div><svg style="position:absolute;left:50.4px;top:855.3px" width="16" height="16" viewBox="0 0 16 16"><path d="M5.3 3L10.5 8L5.3 13" fill="none" stroke="#c5c5c5" stroke-width="1.1"/></svg><div style="position:absolute;left:68.2px;top:851.99px;font:bold 11px/20px 'Liberation Sans',sans-serif;color:#cccccc;letter-spacing:-0.2px;white-space:pre;">OUTLINE</div><div style="position:absolute;left:48px;top:873px;width:315px;height:1px;background:#2b2b2b"></div><svg style="position:absolute;left:50.4px;top:877.1px" width="16" height="16" viewBox="0 0 16 16"><path d="M5.3 3L10.5 8L5.3 13" fill="none" stroke="#c5c5c5" stroke-width="1.1"/></svg><div style="position:absolute;left:68.2px;top:873.79px;font:bold 11px/20px 'Liberation Sans',sans-serif;color:#cccccc;letter-spacing:-0.2px;white-space:pre;">TIMELINE</div><div style="position:absolute;left:48px;top:895px;width:315px;height:1px;background:#2b2b2b"></div><svg style="position:absolute;left:50.4px;top:899.1px" width="16" height="16" viewBox="0 0 16 16"><path d="M5.3 3L10.5 8L5.3 13" fill="none" stroke="#c5c5c5" stroke-width="1.1"/></svg><div style="position:absolute;left:68.2px;top:895.99px;font:bold 11px/20px 'Liberation Sans',sans-serif;color:#cccccc;letter-spacing:-0.4px;white-space:pre;">NPM SCRIPTS</div><div class="rb" style="left:58px;top:230px;width:70px;height:19px"></div><div class="rb" style="left:65px;top:449px;width:97px;height:19px"></div><div class="rb" style="left:83px;top:472px;width:121px;height:19px"></div><div style="position:absolute;left:364px;top:63px;width:1543px;height:34px;background:#181818;border-bottom:1px solid #2b2b2b"></div><div style="position:absolute;left:364px;top:63px;width:141px;height:35px;background:#1f1f1f;border-right:1px solid #2b2b2b;box-sizing:border-box"></div><div style="position:absolute;left:364px;top:63px;width:140px;height:1px;background:#0078d4"></div><svg style="position:absolute;left:374px;top:73px" width="16" height="16" viewBox="-8 -8 16 16"><g fill="none" stroke="#2386d0" stroke-width="1"><ellipse rx="6.5" ry="2.45"/><ellipse rx="6.5" ry="2.45" transform="rotate(60)"/><ellipse rx="6.5" ry="2.45" transform="rotate(120)"/></g><circle r="1.3" fill="#2386d0"/></svg><div style="position:absolute;left:395.5px;top:70.69px;font:normal 13px/20px 'Liberation Sans',sans-serif;color:#ffffff;letter-spacing:0px;white-space:pre;">appColors.tsx</div><svg style="position:absolute;left:482px;top:73px" width="14" height="14" viewBox="0 0 14 14"><path d="M3 3.7L12 12.5M12 3.7L3 12.5" stroke="#dddddd" stroke-width="1"/></svg><svg style="position:absolute;left:1838px;top:74px" width="14" height="15" viewBox="0 0 14 15"><path d="M2.5 1.5L12 7L2.5 12.8Z" fill="none" stroke="#cccccc" stroke-width="1"/></svg><svg style="position:absolute;left:1864px;top:73px" width="15" height="15" viewBox="0 0 15 15"><rect x="1.5" y="1.5" width="13" height="12" rx="1" fill="none" stroke="#cccccc" stroke-width="1"/><path d="M8 2V13" stroke="#cccccc" stroke-width="1"/></svg><svg style="position:absolute;left:1889px;top:75px" width="16" height="12" viewBox="0 0 16 12"><rect x="2" y="5" width="2" height="2" fill="#cccccc"/><rect x="7" y="5" width="2" height="2" fill="#cccccc"/><rect x="12" y="5" width="2" height="2" fill="#cccccc"/></svg><div style="position:absolute;left:364px;top:98px;width:1543px;height:821px;background:#1f1f1f"></div><div style="position:absolute;left:379.5px;top:98.99px;font:normal 13px/20px 'Liberation Sans',sans-serif;color:#a9a9a9;letter-spacing:0px;white-space:pre;">src</div><svg style="position:absolute;left:397px;top:101px" width="16" height="16" viewBox="0 0 16 16"><path d="M5.3 3L10.5 8L5.3 13" fill="none" stroke="#a9a9a9" stroke-width="1.1"/></svg><div style="position:absolute;left:412.5px;top:98.99px;font:normal 13px/20px 'Liberation Sans',sans-serif;color:#a9a9a9;letter-spacing:0px;white-space:pre;">themes</div><svg style="position:absolute;left:456.7px;top:101px" width="16" height="16" viewBox="0 0 16 16"><path d="M5.3 3L10.5 8L5.3 13" fill="none" stroke="#a9a9a9" stroke-width="1.1"/></svg><svg style="position:absolute;left:472px;top:101px" width="16" height="16" viewBox="-8 -8 16 16"><g fill="none" stroke="#2386d0" stroke-width="1"><ellipse rx="6.5" ry="2.45"/><ellipse rx="6.5" ry="2.45" transform="rotate(60)"/><ellipse rx="6.5" ry="2.45" transform="rotate(120)"/></g><circle r="1.3" fill="#2386d0"/></svg><div style="position:absolute;left:494.5px;top:98.99px;font:normal 13px/20px 'Liberation Sans',sans-serif;color:#a9a9a9;letter-spacing:0px;white-space:pre;">appColors.tsx</div><svg style="position:absolute;left:573.5px;top:101px" width="16" height="16" viewBox="0 0 16 16"><path d="M5.3 3L10.5 8L5.3 13" fill="none" stroke="#a9a9a9" stroke-width="1.1"/></svg><div style="position:absolute;left:590px;top:98.99px;font:normal 13px/20px 'Liberation Sans',sans-serif;color:#a9a9a9;letter-spacing:0px;white-space:pre;">...</div><div style="position:absolute;left:434px;top:806px;width:1352px;height:38px;background:#1b3238"></div><div class="ln" style="top:123px">42</div><div class="ln" style="top:142px">43</div><div class="ln" style="top:161px">44</div><div class="ln" style="top:180px">45</div><div class="ln" style="top:199px">46</div><div class="ln" style="top:218px">47</div><div class="ln" style="top:237px">48</div><div class="ln" style="top:256px">49</div><div class="ln" style="top:275px">50</div><div class="ln" style="top:294px">51</div><div class="ln" style="top:313px">52</div><div class="ln" style="top:332px">53</div><div class="ln" style="top:351px">54</div><div class="ln" style="top:370px">55</div><div class="ln" style="top:389px">56</div><div class="ln" style="top:408px">57</div><div class="ln" style="top:427px">58</div><div class="ln" style="top:446px">59</div><div class="ln" style="top:465px">60</div><div class="ln" style="top:484px">61</div><div class="ln" style="top:503px">62</div><div class="ln" style="top:522px">63</div><div class="ln" style="top:541px">64</div><div class="ln" style="top:560px">65</div><div class="ln" style="top:579px">66</div><div class="ln" style="top:598px">67</div><div class="ln" style="top:617px">68</div><div class="ln" style="top:636px">69</div><div class="ln" style="top:655px">70</div><div class="ln" style="top:674px">71</div><div class="ln" style="top:693px">72</div><div class="ln" style="top:712px">73</div><div class="ln" style="top:731px">74</div><div class="ln" style="top:750px">75</div><div class="ln" style="top:769px">76</div><div class="ln" style="top:788px">77</div><div class="ln" style="top:807px">78</div><div class="ln" style="top:826px">79</div><div class="ln" style="top:845px">80</div><div class="ln" style="top:864px">81</div><div class="ln" style="top:883px">82</div><div class="ln" style="top:902px">83</div><div style="position:absolute;left:434px;top:141px;width:1px;height:722px;background:#404040"></div><div class="code" style="top:123px"><span style="color:#c586c0">export</span> <span style="color:#569cd6">const</span> <span style="color:#4fc1ff">appColors</span><span style="color:#cccccc">: </span><span style="color:#4ec9b0">Color</span><span style="color:#cccccc"> = </span><span style="color:#ffd700">{</span></div><div class="code" style="top:142px">  <span style="color:#9cdcfe">lightGray</span><span style="color:#cccccc">: </span><span style="color:#ce9178">&quot;#F5F5F5&quot;</span><span style="color:#cccccc">,</span></div><div class="code" style="top:161px">  <span style="color:#9cdcfe">regularText</span><span style="color:#cccccc">: </span><span style="color:#ce9178">&quot;#8F8F8F&quot;</span><span style="color:#cccccc">,</span></div><div class="code" style="top:180px">  <span style="color:#9cdcfe">primaryText</span><span style="color:#cccccc">: </span><span style="color:#ce9178">&quot;#1F1F1F&quot;</span><span style="color:#cccccc">,</span></div><div class="code" style="top:199px">  <span style="color:#9cdcfe">linearBorder</span><span style="color:#cccccc">: </span><span style="color:#ce9178">&quot;</span><span class="sw" style="background:transparent"></span><span style="color:#ce9178">rgba(149, 143, 159, 0.00)&quot;</span><span style="color:#cccccc">,</span></div><div class="code" style="top:218px">  <span style="color:#9cdcfe">subtitle</span><span style="color:#cccccc">: </span><span style="color:#ce9178">&quot;#9BA6B8&quot;</span><span style="color:#cccccc">,</span></div><div class="code" style="top:237px">  <span style="color:#9cdcfe">lightGreen</span><span style="color:#cccccc">: </span><span style="color:#ce9178">&quot;#E8F4F1&quot;</span><span style="color:#cccccc">,</span></div><div class="code" style="top:256px">  <span style="color:#9cdcfe">whiteColor</span><span style="color:#cccccc">: </span><span style="color:#ce9178">&quot;#fff&quot;</span><span style="color:#cccccc">,</span></div><div class="code" style="top:275px">  <span style="color:#9cdcfe">blackColor</span><span style="color:#cccccc">: </span><span style="color:#ce9178">&quot;#000&quot;</span><span style="color:#cccccc">,</span></div><div class="code" style="top:294px">  <span style="color:#9cdcfe">primaryGray</span><span style="color:#cccccc">: </span><span style="color:#ce9178">&quot;#E9E9E9&quot;</span><span style="color:#cccccc">,</span></div><div class="code" style="top:313px">  <span style="color:#9cdcfe">buttonBg</span><span style="color:#cccccc">: </span><span style="color:#ce9178">&quot;#199675&quot;</span><span style="color:#cccccc">,</span></div><div class="code" style="top:332px">  <span style="color:#9cdcfe">iconBg</span><span style="color:#cccccc">: </span><span style="color:#ce9178">&quot;#32A284&quot;</span><span style="color:#cccccc">,</span></div><div class="code" style="top:351px">  <span style="color:#9cdcfe">modelBg</span><span style="color:#cccccc">: </span><span style="color:#ce9178">&quot;</span><span class="sw" style="background:rgba(0,0,0,0.5)"></span><span style="color:#ce9178">rgba(0, 0, 0, 0.5)&quot;</span><span style="color:#cccccc">,</span></div><div class="code" style="top:370px">  <span style="color:#9cdcfe">darkHeader</span><span style="color:#cccccc">: </span><span style="color:#ce9178">&quot;#272727&quot;</span><span style="color:#cccccc">,</span></div><div class="code" style="top:389px">  <span style="color:#9cdcfe">bgDark</span><span style="color:#cccccc">: </span><span style="color:#ce9178">&quot;#1F1F1F&quot;</span><span style="color:#cccccc">,</span></div><div class="code" style="top:408px">  <span style="color:#9cdcfe">darkPrimary</span><span style="color:#cccccc">: </span><span style="color:#ce9178">&quot;#343434&quot;</span><span style="color:#cccccc">,</span></div><div class="code" style="top:427px">  <span style="color:#9cdcfe">greenColor</span><span style="color:#cccccc">: </span><span style="color:#ce9178">&quot;#313E3B&quot;</span><span style="color:#cccccc">,</span></div><div class="code" style="top:446px">  <span style="color:#9cdcfe">sliderColor</span><span style="color:#cccccc">: </span><span style="color:#ce9178">&quot;#005841&quot;</span><span style="color:#cccccc">,</span></div><div class="code" style="top:465px">  <span style="color:#9cdcfe">readyText</span><span style="color:#cccccc">: </span><span style="color:#ce9178">&quot;#065C46&quot;</span><span style="color:#cccccc">,</span></div><div class="code" style="top:484px">  <span style="color:#9cdcfe">notificationColor</span><span style="color:#cccccc">: </span><span style="color:#ce9178">&quot;#F2F2F2&quot;</span><span style="color:#cccccc">,</span></div><div class="code" style="top:503px">  <span style="color:#9cdcfe">border</span><span style="color:#cccccc">: </span><span style="color:#ce9178">&quot;#E9E9E9&quot;</span><span style="color:#cccccc">,</span></div><div class="code" style="top:522px">  <span style="color:#9cdcfe">categoryTitle</span><span style="color:#cccccc">: </span><span style="color:#ce9178">&quot;#8CCBBA&quot;</span><span style="color:#cccccc">,</span></div><div class="code" style="top:541px">  <span style="color:#9cdcfe">activeColor</span><span style="color:#cccccc">: </span><span style="color:#ce9178">&quot;#3F8FDA&quot;</span><span style="color:#cccccc">,</span></div><div class="code" style="top:560px">  <span style="color:#9cdcfe">completeColor</span><span style="color:#cccccc">: </span><span style="color:#ce9178">&quot;#FFB400&quot;</span><span style="color:#cccccc">,</span></div><div class="code" style="top:579px">  <span style="color:#9cdcfe">scheduleColor</span><span style="color:#cccccc">: </span><span style="color:#ce9178">&quot;#7F00FF&quot;</span><span style="color:#cccccc">,</span></div><div class="code" style="top:598px">  <span style="color:#9cdcfe">price</span><span style="color:#cccccc">: </span><span style="color:#ce9178">&quot;#20B149&quot;</span><span style="color:#cccccc">,</span></div><div class="code" style="top:617px">  <span style="color:#9cdcfe">alertRed</span><span style="color:#cccccc">: </span><span style="color:#ce9178">&quot;#F33737&quot;</span><span style="color:#cccccc">,</span></div><div class="code" style="top:636px">  <span style="color:#9cdcfe">alertBg</span><span style="color:#cccccc">: </span><span style="color:#ce9178">&quot;#F7E4E4&quot;</span><span style="color:#cccccc">,</span></div><div class="code" style="top:655px">  <span style="color:#9cdcfe">iconRed</span><span style="color:#cccccc">: </span><span style="color:#ce9178">&quot;#FEEBEB&quot;</span><span style="color:#cccccc">,</span></div><div class="code" style="top:674px">  <span style="color:#9cdcfe">darkBorder</span><span style="color:#cccccc">: </span><span style="color:#ce9178">&quot;#474747&quot;</span><span style="color:#cccccc">,</span></div><div class="code" style="top:693px">  <span style="color:#9cdcfe">selectPrimary</span><span style="color:#cccccc">: </span><span style="color:#ce9178">&quot;#E8F4F1&quot;</span><span style="color:#cccccc">,</span></div><div class="code" style="top:712px">  <span style="color:#9cdcfe">textRed</span><span style="color:#cccccc">: </span><span style="color:#ce9178">&quot;#FF4B4B&quot;</span><span style="color:#cccccc">,</span></div><div class="code" style="top:731px">  <span style="color:#9cdcfe">iconColor</span><span style="color:#cccccc">: </span><span style="color:#ce9178">&quot;#8F8F8F&quot;</span><span style="color:#cccccc">,</span></div><div class="code" style="top:750px">  <span style="color:#9cdcfe">warnBg</span><span style="color:#cccccc">: </span><span style="color:#ce9178">&quot;#FDD7D7&quot;</span><span style="color:#cccccc">,</span></div><div class="code" style="top:769px">  <span style="color:#9cdcfe">radioBg</span><span style="color:#cccccc">: </span><span style="color:#ce9178">&quot;#52B097&quot;</span><span style="color:#cccccc">,</span></div><div class="code" style="top:788px">  <span style="color:#9cdcfe">lightButton</span><span style="color:#cccccc">: </span><span style="color:#ce9178">&quot;#E8F4F1&quot;</span><span style="color:#cccccc">,</span></div><div class="code" style="top:807px">  <span style="color:#9cdcfe">darkPurpal</span><span style="color:#cccccc">: </span><span style="color:#ce9178">&quot;#C084FC&quot;</span><span style="color:#cccccc">,</span><span style="color:#00b7e4;margin-left:34.6px">"Purpal": Unknown word.</span></div><div class="code" style="top:826px">  <span style="color:#9cdcfe">lightPurpal</span><span style="color:#cccccc">: </span><span style="color:#ce9178">&quot;#F9F3FF&quot;</span><span style="color:#cccccc">,</span><span style="color:#00b7e4;margin-left:34.6px">"Purpal": Unknown word.</span></div><div class="code" style="top:845px">  <span style="color:#9cdcfe">lightRed</span><span style="color:#cccccc">: </span><span style="color:#ce9178">&quot;#FFEDED&quot;</span><span style="color:#cccccc">,</span></div><div class="code" style="top:864px"><span style="color:#ffd700">}</span><span style="color:#cccccc">;</span></div><svg style="position:absolute;left:484.4px;top:821px" width="53.400000000000006" height="4" viewBox="0 0 53.400000000000006 4"><path d="M0 2 Q1 0 2 2 T4 2 Q5 0 6 2 T8 2 Q9 0 10 2 T12 2 Q13 0 14 2 T16 2 Q17 0 18 2 T20 2 Q21 0 22 2 T24 2 Q25 0 26 2 T28 2 Q29 0 30 2 T32 2 Q33 0 34 2 T36 2 Q37 0 38 2 T40 2 Q41 0 42 2 T44 2 Q45 0 46 2 T48 2 Q49 0 50 2 T52 2" fill="none" stroke="#3794ff" stroke-width="1.3"/></svg><svg style="position:absolute;left:492.8px;top:840px" width="53.400000000000006" height="4" viewBox="0 0 53.400000000000006 4"><path d="M0 2 Q1 0 2 2 T4 2 Q5 0 6 2 T8 2 Q9 0 10 2 T12 2 Q13 0 14 2 T16 2 Q17 0 18 2 T20 2 Q21 0 22 2 T24 2 Q25 0 26 2 T28 2 Q29 0 30 2 T32 2 Q33 0 34 2 T36 2 Q37 0 38 2 T40 2 Q41 0 42 2 T44 2 Q45 0 46 2 T48 2 Q49 0 50 2 T52 2" fill="none" stroke="#3794ff" stroke-width="1.3"/></svg><div style="position:absolute;left:364px;top:120px;width:1422px;height:5px;background:linear-gradient(rgba(0,0,0,0.55),rgba(0,0,0,0))"></div><div style="position:absolute;left:1794px;top:229px;width:113px;height:6px;background:#1f5c92"></div><div style="position:absolute;left:1800px;top:229px;width:8px;height:6px;background:#1b9cf0;border-radius:2px"></div><div style="position:absolute;left:1794px;top:352px;width:113px;height:6px;background:#1f5c92"></div><div style="position:absolute;left:1800px;top:352px;width:8px;height:6px;background:#1b9cf0;border-radius:2px"></div><div style="position:absolute;left:1794px;top:120px;width:6px;height:2px;background:#c586c0;opacity:0.62"></div><div style="position:absolute;left:1801px;top:120px;width:4px;height:2px;background:#569cd6;opacity:0.62"></div><div style="position:absolute;left:1806px;top:120px;width:5px;height:2px;background:#4ec9b0;opacity:0.62"></div><div style="position:absolute;left:1812px;top:120px;width:1px;height:2px;background:#cccccc;opacity:0.62"></div><div style="position:absolute;left:1814px;top:120px;width:1px;height:2px;background:#cccccc;opacity:0.62"></div><div style="position:absolute;left:1796px;top:123px;width:9px;height:2px;background:#9cdcfe;opacity:0.62"></div><div style="position:absolute;left:1805px;top:123px;width:1px;height:2px;background:#cccccc;opacity:0.62"></div><div style="position:absolute;left:1807px;top:123px;width:6px;height:2px;background:#4ec9b0;opacity:0.62"></div><div style="position:absolute;left:1813px;top:123px;width:1px;height:2px;background:#cccccc;opacity:0.62"></div><div style="position:absolute;left:1796px;top:126px;width:11px;height:2px;background:#9cdcfe;opacity:0.62"></div><div style="position:absolute;left:1807px;top:126px;width:1px;height:2px;background:#cccccc;opacity:0.62"></div><div style="position:absolute;left:1809px;top:126px;width:6px;height:2px;background:#4ec9b0;opacity:0.62"></div><div style="position:absolute;left:1815px;top:126px;width:1px;height:2px;background:#cccccc;opacity:0.62"></div><div style="position:absolute;left:1796px;top:129px;width:11px;height:2px;background:#9cdcfe;opacity:0.62"></div><div style="position:absolute;left:1807px;top:129px;width:1px;height:2px;background:#cccccc;opacity:0.62"></div><div style="position:absolute;left:1809px;top:129px;width:6px;height:2px;background:#4ec9b0;opacity:0.62"></div><div style="position:absolute;left:1815px;top:129px;width:1px;height:2px;background:#cccccc;opacity:0.62"></div><div style="position:absolute;left:1796px;top:132px;width:12px;height:2px;background:#9cdcfe;opacity:0.62"></div><div style="position:absolute;left:1808px;top:132px;width:1px;height:2px;background:#cccccc;opacity:0.62"></div><div style="position:absolute;left:1810px;top:132px;width:6px;height:2px;background:#4ec9b0;opacity:0.62"></div><div style="position:absolute;left:1816px;top:132px;width:1px;height:2px;background:#cccccc;opacity:0.62"></div><div style="position:absolute;left:1796px;top:135px;width:8px;height:2px;background:#9cdcfe;opacity:0.62"></div><div style="position:absolute;left:1804px;top:135px;width:1px;height:2px;background:#cccccc;opacity:0.62"></div><div style="position:absolute;left:1806px;top:135px;width:6px;height:2px;background:#4ec9b0;opacity:0.62"></div><div style="position:absolute;left:1812px;top:135px;width:1px;height:2px;background:#cccccc;opacity:0.62"></div><div style="position:absolute;left:1796px;top:138px;width:10px;height:2px;background:#9cdcfe;opacity:0.62"></div><div style="position:absolute;left:1806px;top:138px;width:1px;height:2px;background:#cccccc;opacity:0.62"></div><div style="position:absolute;left:1808px;top:138px;width:6px;height:2px;background:#4ec9b0;opacity:0.62"></div><div style="position:absolute;left:1814px;top:138px;width:1px;height:2px;background:#cccccc;opacity:0.62"></div><div style="position:absolute;left:1796px;top:141px;width:10px;height:2px;background:#9cdcfe;opacity:0.62"></div><div style="position:absolute;left:1806px;top:141px;width:1px;height:2px;background:#cccccc;opacity:0.62"></div><div style="position:absolute;left:1808px;top:141px;width:6px;height:2px;background:#4ec9b0;opacity:0.62"></div><div style="position:absolute;left:1814px;top:141px;width:1px;height:2px;background:#cccccc;opacity:0.62"></div><div style="position:absolute;left:1796px;top:144px;width:10px;height:2px;background:#9cdcfe;opacity:0.62"></div><div style="position:absolute;left:1806px;top:144px;width:1px;height:2px;background:#cccccc;opacity:0.62"></div><div style="position:absolute;left:1808px;top:144px;width:6px;height:2px;background:#4ec9b0;opacity:0.62"></div><div style="position:absolute;left:1814px;top:144px;width:1px;height:2px;background:#cccccc;opacity:0.62"></div><div style="position:absolute;left:1796px;top:147px;width:11px;height:2px;background:#9cdcfe;opacity:0.62"></div><div style="position:absolute;left:1807px;top:147px;width:1px;height:2px;background:#cccccc;opacity:0.62"></div><div style="position:absolute;left:1809px;top:147px;width:6px;height:2px;background:#4ec9b0;opacity:0.62"></div><div style="position:absolute;left:1815px;top:147px;width:1px;height:2px;background:#cccccc;opacity:0.62"></div><div style="position:absolute;left:1796px;top:150px;width:8px;height:2px;background:#9cdcfe;opacity:0.62"></div><div style="position:absolute;left:1804px;top:150px;width:1px;height:2px;background:#cccccc;opacity:0.62"></div><div style="position:absolute;left:1806px;top:150px;width:6px;height:2px;background:#4ec9b0;opacity:0.62"></div><div style="position:absolute;left:1812px;top:150px;width:1px;height:2px;background:#cccccc;opacity:0.62"></div><div style="position:absolute;left:1796px;top:153px;width:6px;height:2px;background:#9cdcfe;opacity:0.62"></div><div style="position:absolute;left:1802px;top:153px;width:1px;height:2px;background:#cccccc;opacity:0.62"></div><div style="position:absolute;left:1804px;top:153px;width:6px;height:2px;background:#4ec9b0;opacity:0.62"></div><div style="position:absolute;left:1810px;top:153px;width:1px;height:2px;background:#cccccc;opacity:0.62"></div><div style="position:absolute;left:1796px;top:156px;width:7px;height:2px;background:#9cdcfe;opacity:0.62"></div><div style="position:absolute;left:1803px;top:156px;width:1px;height:2px;background:#cccccc;opacity:0.62"></div><div style="position:absolute;left:1805px;top:156px;width:6px;height:2px;background:#4ec9b0;opacity:0.62"></div><div style="position:absolute;left:1811px;top:156px;width:1px;height:2px;background:#cccccc;opacity:0.62"></div><div style="position:absolute;left:1796px;top:159px;width:10px;height:2px;background:#9cdcfe;opacity:0.62"></div><div style="position:absolute;left:1806px;top:159px;width:1px;height:2px;background:#cccccc;opacity:0.62"></div><div style="position:absolute;left:1808px;top:159px;width:6px;height:2px;background:#4ec9b0;opacity:0.62"></div><div style="position:absolute;left:1814px;top:159px;width:1px;height:2px;background:#cccccc;opacity:0.62"></div><div style="position:absolute;left:1796px;top:162px;width:6px;height:2px;background:#9cdcfe;opacity:0.62"></div><div style="position:absolute;left:1802px;top:162px;width:1px;height:2px;background:#cccccc;opacity:0.62"></div><div style="position:absolute;left:1804px;top:162px;width:6px;height:2px;background:#4ec9b0;opacity:0.62"></div><div style="position:absolute;left:1810px;top:162px;width:1px;height:2px;background:#cccccc;opacity:0.62"></div><div style="position:absolute;left:1796px;top:165px;width:11px;height:2px;background:#9cdcfe;opacity:0.62"></div><div style="position:absolute;left:1807px;top:165px;width:1px;height:2px;background:#cccccc;opacity:0.62"></div><div style="position:absolute;left:1809px;top:165px;width:6px;height:2px;background:#4ec9b0;opacity:0.62"></div><div style="position:absolute;left:1815px;top:165px;width:1px;height:2px;background:#cccccc;opacity:0.62"></div><div style="position:absolute;left:1796px;top:168px;width:10px;height:2px;background:#9cdcfe;opacity:0.62"></div><div style="position:absolute;left:1806px;top:168px;width:1px;height:2px;background:#cccccc;opacity:0.62"></div><div style="position:absolute;left:1808px;top:168px;width:6px;height:2px;background:#4ec9b0;opacity:0.62"></div><div style="position:absolute;left:1814px;top:168px;width:1px;height:2px;background:#cccccc;opacity:0.62"></div><div style="position:absolute;left:1796px;top:171px;width:11px;height:2px;background:#9cdcfe;opacity:0.62"></div><div style="position:absolute;left:1807px;top:171px;width:1px;height:2px;background:#cccccc;opacity:0.62"></div><div style="position:absolute;left:1809px;top:171px;width:6px;height:2px;background:#4ec9b0;opacity:0.62"></div><div style="position:absolute;left:1815px;top:171px;width:1px;height:2px;background:#cccccc;opacity:0.62"></div><div style="position:absolute;left:1796px;top:174px;width:9px;height:2px;background:#9cdcfe;opacity:0.62"></div><div style="position:absolute;left:1805px;top:174px;width:1px;height:2px;background:#cccccc;opacity:0.62"></div><div style="position:absolute;left:1807px;top:174px;width:6px;height:2px;background:#4ec9b0;opacity:0.62"></div><div style="position:absolute;left:1813px;top:174px;width:1px;height:2px;background:#cccccc;opacity:0.62"></div><div style="position:absolute;left:1796px;top:177px;width:17px;height:2px;background:#9cdcfe;opacity:0.62"></div><div style="position:absolute;left:1813px;top:177px;width:1px;height:2px;background:#cccccc;opacity:0.62"></div><div style="position:absolute;left:1815px;top:177px;width:6px;height:2px;background:#4ec9b0;opacity:0.62"></div><div style="position:absolute;left:1821px;top:177px;width:1px;height:2px;background:#cccccc;opacity:0.62"></div><div style="position:absolute;left:1796px;top:180px;width:6px;height:2px;background:#9cdcfe;opacity:0.62"></div><div style="position:absolute;left:1802px;top:180px;width:1px;height:2px;background:#cccccc;opacity:0.62"></div><div style="position:absolute;left:1804px;top:180px;width:6px;height:2px;background:#4ec9b0;opacity:0.62"></div><div style="position:absolute;left:1810px;top:180px;width:1px;height:2px;background:#cccccc;opacity:0.62"></div><div style="position:absolute;left:1796px;top:183px;width:13px;height:2px;background:#9cdcfe;opacity:0.62"></div><div style="position:absolute;left:1809px;top:183px;width:1px;height:2px;background:#cccccc;opacity:0.62"></div><div style="position:absolute;left:1811px;top:183px;width:6px;height:2px;background:#4ec9b0;opacity:0.62"></div><div style="position:absolute;left:1817px;top:183px;width:1px;height:2px;background:#cccccc;opacity:0.62"></div><div style="position:absolute;left:1796px;top:186px;width:11px;height:2px;background:#9cdcfe;opacity:0.62"></div><div style="position:absolute;left:1807px;top:186px;width:1px;height:2px;background:#cccccc;opacity:0.62"></div><div style="position:absolute;left:1809px;top:186px;width:6px;height:2px;background:#4ec9b0;opacity:0.62"></div><div style="position:absolute;left:1815px;top:186px;width:1px;height:2px;background:#cccccc;opacity:0.62"></div><div style="position:absolute;left:1796px;top:189px;width:13px;height:2px;background:#9cdcfe;opacity:0.62"></div><div style="position:absolute;left:1809px;top:189px;width:1px;height:2px;background:#cccccc;opacity:0.62"></div><div style="position:absolute;left:1811px;top:189px;width:6px;height:2px;background:#4ec9b0;opacity:0.62"></div><div style="position:absolute;left:1817px;top:189px;width:1px;height:2px;background:#cccccc;opacity:0.62"></div><div style="position:absolute;left:1796px;top:192px;width:13px;height:2px;background:#9cdcfe;opacity:0.62"></div><div style="position:absolute;left:1809px;top:192px;width:1px;height:2px;background:#cccccc;opacity:0.62"></div><div style="position:absolute;left:1811px;top:192px;width:6px;height:2px;background:#4ec9b0;opacity:0.62"></div><div style="position:absolute;left:1817px;top:192px;width:1px;height:2px;background:#cccccc;opacity:0.62"></div><div style="position:absolute;left:1796px;top:195px;width:5px;height:2px;background:#9cdcfe;opacity:0.62"></div><div style="position:absolute;left:1801px;top:195px;width:1px;height:2px;background:#cccccc;opacity:0.62"></div><div style="position:absolute;left:1803px;top:195px;width:6px;height:2px;background:#4ec9b0;opacity:0.62"></div><div style="position:absolute;left:1809px;top:195px;width:1px;height:2px;background:#cccccc;opacity:0.62"></div><div style="position:absolute;left:1796px;top:198px;width:8px;height:2px;background:#9cdcfe;opacity:0.62"></div><div style="position:absolute;left:1804px;top:198px;width:1px;height:2px;background:#cccccc;opacity:0.62"></div><div style="position:absolute;left:1806px;top:198px;width:6px;height:2px;background:#4ec9b0;opacity:0.62"></div><div style="position:absolute;left:1812px;top:198px;width:1px;height:2px;background:#cccccc;opacity:0.62"></div><div style="position:absolute;left:1796px;top:201px;width:7px;height:2px;background:#9cdcfe;opacity:0.62"></div><div style="position:absolute;left:1803px;top:201px;width:1px;height:2px;background:#cccccc;opacity:0.62"></div><div style="position:absolute;left:1805px;top:201px;width:6px;height:2px;background:#4ec9b0;opacity:0.62"></div><div style="position:absolute;left:1811px;top:201px;width:1px;height:2px;background:#cccccc;opacity:0.62"></div><div style="position:absolute;left:1796px;top:204px;width:7px;height:2px;background:#9cdcfe;opacity:0.62"></div><div style="position:absolute;left:1803px;top:204px;width:1px;height:2px;background:#cccccc;opacity:0.62"></div><div style="position:absolute;left:1805px;top:204px;width:6px;height:2px;background:#4ec9b0;opacity:0.62"></div><div style="position:absolute;left:1811px;top:204px;width:1px;height:2px;background:#cccccc;opacity:0.62"></div><div style="position:absolute;left:1796px;top:207px;width:10px;height:2px;background:#9cdcfe;opacity:0.62"></div><div style="position:absolute;left:1806px;top:207px;width:1px;height:2px;background:#cccccc;opacity:0.62"></div><div style="position:absolute;left:1808px;top:207px;width:6px;height:2px;background:#4ec9b0;opacity:0.62"></div><div style="position:absolute;left:1814px;top:207px;width:1px;height:2px;background:#cccccc;opacity:0.62"></div><div style="position:absolute;left:1796px;top:210px;width:13px;height:2px;background:#9cdcfe;opacity:0.62"></div><div style="position:absolute;left:1809px;top:210px;width:1px;height:2px;background:#cccccc;opacity:0.62"></div><div style="position:absolute;left:1811px;top:210px;width:6px;height:2px;background:#4ec9b0;opacity:0.62"></div><div style="position:absolute;left:1817px;top:210px;width:1px;height:2px;background:#cccccc;opacity:0.62"></div><div style="position:absolute;left:1796px;top:213px;width:7px;height:2px;background:#9cdcfe;opacity:0.62"></div><div style="position:absolute;left:1803px;top:213px;width:1px;height:2px;background:#cccccc;opacity:0.62"></div><div style="position:absolute;left:1805px;top:213px;width:6px;height:2px;background:#4ec9b0;opacity:0.62"></div><div style="position:absolute;left:1811px;top:213px;width:1px;height:2px;background:#cccccc;opacity:0.62"></div><div style="position:absolute;left:1796px;top:216px;width:9px;height:2px;background:#9cdcfe;opacity:0.62"></div><div style="position:absolute;left:1805px;top:216px;width:1px;height:2px;background:#cccccc;opacity:0.62"></div><div style="position:absolute;left:1807px;top:216px;width:6px;height:2px;background:#4ec9b0;opacity:0.62"></div><div style="position:absolute;left:1813px;top:216px;width:1px;height:2px;background:#cccccc;opacity:0.62"></div><div style="position:absolute;left:1796px;top:219px;width:6px;height:2px;background:#9cdcfe;opacity:0.62"></div><div style="position:absolute;left:1802px;top:219px;width:1px;height:2px;background:#cccccc;opacity:0.62"></div><div style="position:absolute;left:1804px;top:219px;width:6px;height:2px;background:#4ec9b0;opacity:0.62"></div><div style="position:absolute;left:1810px;top:219px;width:1px;height:2px;background:#cccccc;opacity:0.62"></div><div style="position:absolute;left:1796px;top:222px;width:7px;height:2px;background:#9cdcfe;opacity:0.62"></div><div style="position:absolute;left:1803px;top:222px;width:1px;height:2px;background:#cccccc;opacity:0.62"></div><div style="position:absolute;left:1805px;top:222px;width:6px;height:2px;background:#4ec9b0;opacity:0.62"></div><div style="position:absolute;left:1811px;top:222px;width:1px;height:2px;background:#cccccc;opacity:0.62"></div><div style="position:absolute;left:1796px;top:225px;width:11px;height:2px;background:#9cdcfe;opacity:0.62"></div><div style="position:absolute;left:1807px;top:225px;width:1px;height:2px;background:#cccccc;opacity:0.62"></div><div style="position:absolute;left:1809px;top:225px;width:6px;height:2px;background:#4ec9b0;opacity:0.62"></div><div style="position:absolute;left:1815px;top:225px;width:1px;height:2px;background:#cccccc;opacity:0.62"></div><div style="position:absolute;left:1796px;top:228px;width:10px;height:2px;background:#9cdcfe;opacity:0.62"></div><div style="position:absolute;left:1806px;top:228px;width:1px;height:2px;background:#cccccc;opacity:0.62"></div><div style="position:absolute;left:1808px;top:228px;width:6px;height:2px;background:#4ec9b0;opacity:0.62"></div><div style="position:absolute;left:1814px;top:228px;width:1px;height:2px;background:#cccccc;opacity:0.62"></div><div style="position:absolute;left:1796px;top:231px;width:11px;height:2px;background:#9cdcfe;opacity:0.62"></div><div style="position:absolute;left:1807px;top:231px;width:1px;height:2px;background:#cccccc;opacity:0.62"></div><div style="position:absolute;left:1809px;top:231px;width:6px;height:2px;background:#4ec9b0;opacity:0.62"></div><div style="position:absolute;left:1815px;top:231px;width:1px;height:2px;background:#cccccc;opacity:0.62"></div><div style="position:absolute;left:1796px;top:234px;width:8px;height:2px;background:#9cdcfe;opacity:0.62"></div><div style="position:absolute;left:1804px;top:234px;width:1px;height:2px;background:#cccccc;opacity:0.62"></div><div style="position:absolute;left:1806px;top:234px;width:6px;height:2px;background:#4ec9b0;opacity:0.62"></div><div style="position:absolute;left:1812px;top:234px;width:1px;height:2px;background:#cccccc;opacity:0.62"></div><div style="position:absolute;left:1794px;top:237px;width:2px;height:2px;background:#cccccc;opacity:0.62"></div><div style="position:absolute;left:1794px;top:243px;width:6px;height:2px;background:#c586c0;opacity:0.62"></div><div style="position:absolute;left:1801px;top:243px;width:5px;height:2px;background:#569cd6;opacity:0.62"></div><div style="position:absolute;left:1807px;top:243px;width:9px;height:2px;background:#4fc1ff;opacity:0.62"></div><div style="position:absolute;left:1816px;top:243px;width:1px;height:2px;background:#cccccc;opacity:0.62"></div><div style="position:absolute;left:1818px;top:243px;width:5px;height:2px;background:#4ec9b0;opacity:0.62"></div><div style="position:absolute;left:1824px;top:243px;width:1px;height:2px;background:#cccccc;opacity:0.62"></div><div style="position:absolute;left:1826px;top:243px;width:1px;height:2px;background:#cccccc;opacity:0.62"></div><div style="position:absolute;left:1796px;top:246px;width:9px;height:2px;background:#9cdcfe;opacity:0.62"></div><div style="position:absolute;left:1805px;top:246px;width:1px;height:2px;background:#cccccc;opacity:0.62"></div><div style="position:absolute;left:1807px;top:246px;width:9px;height:2px;background:#ce9178;opacity:0.62"></div><div style="position:absolute;left:1816px;top:246px;width:1px;height:2px;background:#cccccc;opacity:0.62"></div><div style="position:absolute;left:1796px;top:249px;width:11px;height:2px;background:#9cdcfe;opacity:0.62"></div><div style="position:absolute;left:1807px;top:249px;width:1px;height:2px;background:#cccccc;opacity:0.62"></div><div style="position:absolute;left:1809px;top:249px;width:9px;height:2px;background:#ce9178;opacity:0.62"></div><div style="position:absolute;left:1818px;top:249px;width:1px;height:2px;background:#cccccc;opacity:0.62"></div><div style="position:absolute;left:1796px;top:252px;width:11px;height:2px;background:#9cdcfe;opacity:0.62"></div><div style="position:absolute;left:1807px;top:252px;width:1px;height:2px;background:#cccccc;opacity:0.62"></div><div style="position:absolute;left:1809px;top:252px;width:9px;height:2px;background:#ce9178;opacity:0.62"></div><div style="position:absolute;left:1818px;top:252px;width:1px;height:2px;background:#cccccc;opacity:0.62"></div><div style="position:absolute;left:1796px;top:255px;width:12px;height:2px;background:#9cdcfe;opacity:0.62"></div><div style="position:absolute;left:1808px;top:255px;width:1px;height:2px;background:#cccccc;opacity:0.62"></div><div style="position:absolute;left:1810px;top:255px;width:1px;height:2px;background:#ce9178;opacity:0.62"></div><div style="position:absolute;left:1813px;top:255px;width:9px;height:2px;background:#ce9178;opacity:0.62"></div><div style="position:absolute;left:1823px;top:255px;width:4px;height:2px;background:#ce9178;opacity:0.62"></div><div style="position:absolute;left:1828px;top:255px;width:4px;height:2px;background:#ce9178;opacity:0.62"></div><div style="position:absolute;left:1833px;top:255px;width:6px;height:2px;background:#ce9178;opacity:0.62"></div><div style="position:absolute;left:1839px;top:255px;width:1px;height:2px;background:#cccccc;opacity:0.62"></div><div style="position:absolute;left:1796px;top:258px;width:8px;height:2px;background:#9cdcfe;opacity:0.62"></div><div style="position:absolute;left:1804px;top:258px;width:1px;height:2px;background:#cccccc;opacity:0.62"></div><div style="position:absolute;left:1806px;top:258px;width:9px;height:2px;background:#ce9178;opacity:0.62"></div><div style="position:absolute;left:1815px;top:258px;width:1px;height:2px;background:#cccccc;opacity:0.62"></div><div style="position:absolute;left:1796px;top:261px;width:10px;height:2px;background:#9cdcfe;opacity:0.62"></div><div style="position:absolute;left:1806px;top:261px;width:1px;height:2px;background:#cccccc;opacity:0.62"></div><div style="position:absolute;left:1808px;top:261px;width:9px;height:2px;background:#ce9178;opacity:0.62"></div><div style="position:absolute;left:1817px;top:261px;width:1px;height:2px;background:#cccccc;opacity:0.62"></div><div style="position:absolute;left:1796px;top:264px;width:10px;height:2px;background:#9cdcfe;opacity:0.62"></div><div style="position:absolute;left:1806px;top:264px;width:1px;height:2px;background:#cccccc;opacity:0.62"></div><div style="position:absolute;left:1808px;top:264px;width:6px;height:2px;background:#ce9178;opacity:0.62"></div><div style="position:absolute;left:1814px;top:264px;width:1px;height:2px;background:#cccccc;opacity:0.62"></div><div style="position:absolute;left:1796px;top:267px;width:10px;height:2px;background:#9cdcfe;opacity:0.62"></div><div style="position:absolute;left:1806px;top:267px;width:1px;height:2px;background:#cccccc;opacity:0.62"></div><div style="position:absolute;left:1808px;top:267px;width:6px;height:2px;background:#ce9178;opacity:0.62"></div><div style="position:absolute;left:1814px;top:267px;width:1px;height:2px;background:#cccccc;opacity:0.62"></div><div style="position:absolute;left:1796px;top:270px;width:11px;height:2px;background:#9cdcfe;opacity:0.62"></div><div style="position:absolute;left:1807px;top:270px;width:1px;height:2px;background:#cccccc;opacity:0.62"></div><div style="position:absolute;left:1809px;top:270px;width:9px;height:2px;background:#ce9178;opacity:0.62"></div><div style="position:absolute;left:1818px;top:270px;width:1px;height:2px;background:#cccccc;opacity:0.62"></div><div style="position:absolute;left:1796px;top:273px;width:8px;height:2px;background:#9cdcfe;opacity:0.62"></div><div style="position:absolute;left:1804px;top:273px;width:1px;height:2px;background:#cccccc;opacity:0.62"></div><div style="position:absolute;left:1806px;top:273px;width:9px;height:2px;background:#ce9178;opacity:0.62"></div><div style="position:absolute;left:1815px;top:273px;width:1px;height:2px;background:#cccccc;opacity:0.62"></div><div style="position:absolute;left:1796px;top:276px;width:6px;height:2px;background:#9cdcfe;opacity:0.62"></div><div style="position:absolute;left:1802px;top:276px;width:1px;height:2px;background:#cccccc;opacity:0.62"></div><div style="position:absolute;left:1804px;top:276px;width:9px;height:2px;background:#ce9178;opacity:0.62"></div><div style="position:absolute;left:1813px;top:276px;width:1px;height:2px;background:#cccccc;opacity:0.62"></div><div style="position:absolute;left:1796px;top:279px;width:7px;height:2px;background:#9cdcfe;opacity:0.62"></div><div style="position:absolute;left:1803px;top:279px;width:1px;height:2px;background:#cccccc;opacity:0.62"></div><div style="position:absolute;left:1805px;top:279px;width:1px;height:2px;background:#ce9178;opacity:0.62"></div><div style="position:absolute;left:1808px;top:279px;width:7px;height:2px;background:#ce9178;opacity:0.62"></div><div style="position:absolute;left:1816px;top:279px;width:2px;height:2px;background:#ce9178;opacity:0.62"></div><div style="position:absolute;left:1819px;top:279px;width:2px;height:2px;background:#ce9178;opacity:0.62"></div><div style="position:absolute;left:1822px;top:279px;width:5px;height:2px;background:#ce9178;opacity:0.62"></div><div style="position:absolute;left:1827px;top:279px;width:1px;height:2px;background:#cccccc;opacity:0.62"></div><div style="position:absolute;left:1796px;top:282px;width:10px;height:2px;background:#9cdcfe;opacity:0.62"></div><div style="position:absolute;left:1806px;top:282px;width:1px;height:2px;background:#cccccc;opacity:0.62"></div><div style="position:absolute;left:1808px;top:282px;width:9px;height:2px;background:#ce9178;opacity:0.62"></div><div style="position:absolute;left:1817px;top:282px;width:1px;height:2px;background:#cccccc;opacity:0.62"></div><div style="position:absolute;left:1796px;top:285px;width:6px;height:2px;background:#9cdcfe;opacity:0.62"></div><div style="position:absolute;left:1802px;top:285px;width:1px;height:2px;background:#cccccc;opacity:0.62"></div><div style="position:absolute;left:1804px;top:285px;width:9px;height:2px;background:#ce9178;opacity:0.62"></div><div style="position:absolute;left:1813px;top:285px;width:1px;height:2px;background:#cccccc;opacity:0.62"></div><div style="position:absolute;left:1796px;top:288px;width:11px;height:2px;background:#9cdcfe;opacity:0.62"></div><div style="position:absolute;left:1807px;top:288px;width:1px;height:2px;background:#cccccc;opacity:0.62"></div><div style="position:absolute;left:1809px;top:288px;width:9px;height:2px;background:#ce9178;opacity:0.62"></div><div style="position:absolute;left:1818px;top:288px;width:1px;height:2px;background:#cccccc;opacity:0.62"></div><div style="position:absolute;left:1796px;top:291px;width:10px;height:2px;background:#9cdcfe;opacity:0.62"></div><div style="position:absolute;left:1806px;top:291px;width:1px;height:2px;background:#cccccc;opacity:0.62"></div><div style="position:absolute;left:1808px;top:291px;width:9px;height:2px;background:#ce9178;opacity:0.62"></div><div style="position:absolute;left:1817px;top:291px;width:1px;height:2px;background:#cccccc;opacity:0.62"></div><div style="position:absolute;left:1796px;top:294px;width:11px;height:2px;background:#9cdcfe;opacity:0.62"></div><div style="position:absolute;left:1807px;top:294px;width:1px;height:2px;background:#cccccc;opacity:0.62"></div><div style="position:absolute;left:1809px;top:294px;width:9px;height:2px;background:#ce9178;opacity:0.62"></div><div style="position:absolute;left:1818px;top:294px;width:1px;height:2px;background:#cccccc;opacity:0.62"></div><div style="position:absolute;left:1796px;top:297px;width:9px;height:2px;background:#9cdcfe;opacity:0.62"></div><div style="position:absolute;left:1805px;top:297px;width:1px;height:2px;background:#cccccc;opacity:0.62"></div><div style="position:absolute;left:1807px;top:297px;width:9px;height:2px;background:#ce9178;opacity:0.62"></div><div style="position:absolute;left:1816px;top:297px;width:1px;height:2px;background:#cccccc;opacity:0.62"></div><div style="position:absolute;left:1796px;top:300px;width:17px;height:2px;background:#9cdcfe;opacity:0.62"></div><div style="position:absolute;left:1813px;top:300px;width:1px;height:2px;background:#cccccc;opacity:0.62"></div><div style="position:absolute;left:1815px;top:300px;width:9px;height:2px;background:#ce9178;opacity:0.62"></div><div style="position:absolute;left:1824px;top:300px;width:1px;height:2px;background:#cccccc;opacity:0.62"></div><div style="position:absolute;left:1796px;top:303px;width:6px;height:2px;background:#9cdcfe;opacity:0.62"></div><div style="position:absolute;left:1802px;top:303px;width:1px;height:2px;background:#cccccc;opacity:0.62"></div><div style="position:absolute;left:1804px;top:303px;width:9px;height:2px;background:#ce9178;opacity:0.62"></div><div style="position:absolute;left:1813px;top:303px;width:1px;height:2px;background:#cccccc;opacity:0.62"></div><div style="position:absolute;left:1796px;top:306px;width:13px;height:2px;background:#9cdcfe;opacity:0.62"></div><div style="position:absolute;left:1809px;top:306px;width:1px;height:2px;background:#cccccc;opacity:0.62"></div><div style="position:absolute;left:1811px;top:306px;width:9px;height:2px;background:#ce9178;opacity:0.62"></div><div style="position:absolute;left:1820px;top:306px;width:1px;height:2px;background:#cccccc;opacity:0.62"></div><div style="position:absolute;left:1796px;top:309px;width:11px;height:2px;background:#9cdcfe;opacity:0.62"></div><div style="position:absolute;left:1807px;top:309px;width:1px;height:2px;background:#cccccc;opacity:0.62"></div><div style="position:absolute;left:1809px;top:309px;width:9px;height:2px;background:#ce9178;opacity:0.62"></div><div style="position:absolute;left:1818px;top:309px;width:1px;height:2px;background:#cccccc;opacity:0.62"></div><div style="position:absolute;left:1796px;top:312px;width:13px;height:2px;background:#9cdcfe;opacity:0.62"></div><div style="position:absolute;left:1809px;top:312px;width:1px;height:2px;background:#cccccc;opacity:0.62"></div><div style="position:absolute;left:1811px;top:312px;width:9px;height:2px;background:#ce9178;opacity:0.62"></div><div style="position:absolute;left:1820px;top:312px;width:1px;height:2px;background:#cccccc;opacity:0.62"></div><div style="position:absolute;left:1796px;top:315px;width:13px;height:2px;background:#9cdcfe;opacity:0.62"></div><div style="position:absolute;left:1809px;top:315px;width:1px;height:2px;background:#cccccc;opacity:0.62"></div><div style="position:absolute;left:1811px;top:315px;width:9px;height:2px;background:#ce9178;opacity:0.62"></div><div style="position:absolute;left:1820px;top:315px;width:1px;height:2px;background:#cccccc;opacity:0.62"></div><div style="position:absolute;left:1796px;top:318px;width:5px;height:2px;background:#9cdcfe;opacity:0.62"></div><div style="position:absolute;left:1801px;top:318px;width:1px;height:2px;background:#cccccc;opacity:0.62"></div><div style="position:absolute;left:1803px;top:318px;width:9px;height:2px;background:#ce9178;opacity:0.62"></div><div style="position:absolute;left:1812px;top:318px;width:1px;height:2px;background:#cccccc;opacity:0.62"></div><div style="position:absolute;left:1796px;top:321px;width:8px;height:2px;background:#9cdcfe;opacity:0.62"></div><div style="position:absolute;left:1804px;top:321px;width:1px;height:2px;background:#cccccc;opacity:0.62"></div><div style="position:absolute;left:1806px;top:321px;width:9px;height:2px;background:#ce9178;opacity:0.62"></div><div style="position:absolute;left:1815px;top:321px;width:1px;height:2px;background:#cccccc;opacity:0.62"></div><div style="position:absolute;left:1796px;top:324px;width:7px;height:2px;background:#9cdcfe;opacity:0.62"></div><div style="position:absolute;left:1803px;top:324px;width:1px;height:2px;background:#cccccc;opacity:0.62"></div><div style="position:absolute;left:1805px;top:324px;width:9px;height:2px;background:#ce9178;opacity:0.62"></div><div style="position:absolute;left:1814px;top:324px;width:1px;height:2px;background:#cccccc;opacity:0.62"></div><div style="position:absolute;left:1796px;top:327px;width:7px;height:2px;background:#9cdcfe;opacity:0.62"></div><div style="position:absolute;left:1803px;top:327px;width:1px;height:2px;background:#cccccc;opacity:0.62"></div><div style="position:absolute;left:1805px;top:327px;width:9px;height:2px;background:#ce9178;opacity:0.62"></div><div style="position:absolute;left:1814px;top:327px;width:1px;height:2px;background:#cccccc;opacity:0.62"></div><div style="position:absolute;left:1796px;top:330px;width:10px;height:2px;background:#9cdcfe;opacity:0.62"></div><div style="position:absolute;left:1806px;top:330px;width:1px;height:2px;background:#cccccc;opacity:0.62"></div><div style="position:absolute;left:1808px;top:330px;width:9px;height:2px;background:#ce9178;opacity:0.62"></div><div style="position:absolute;left:1817px;top:330px;width:1px;height:2px;background:#cccccc;opacity:0.62"></div><div style="position:absolute;left:1796px;top:333px;width:13px;height:2px;background:#9cdcfe;opacity:0.62"></div><div style="position:absolute;left:1809px;top:333px;width:1px;height:2px;background:#cccccc;opacity:0.62"></div><div style="position:absolute;left:1811px;top:333px;width:9px;height:2px;background:#ce9178;opacity:0.62"></div><div style="position:absolute;left:1820px;top:333px;width:1px;height:2px;background:#cccccc;opacity:0.62"></div><div style="position:absolute;left:1796px;top:336px;width:7px;height:2px;background:#9cdcfe;opacity:0.62"></div><div style="position:absolute;left:1803px;top:336px;width:1px;height:2px;background:#cccccc;opacity:0.62"></div><div style="position:absolute;left:1805px;top:336px;width:9px;height:2px;background:#ce9178;opacity:0.62"></div><div style="position:absolute;left:1814px;top:336px;width:1px;height:2px;background:#cccccc;opacity:0.62"></div><div style="position:absolute;left:1796px;top:339px;width:9px;height:2px;background:#9cdcfe;opacity:0.62"></div><div style="position:absolute;left:1805px;top:339px;width:1px;height:2px;background:#cccccc;opacity:0.62"></div><div style="position:absolute;left:1807px;top:339px;width:9px;height:2px;background:#ce9178;opacity:0.62"></div><div style="position:absolute;left:1816px;top:339px;width:1px;height:2px;background:#cccccc;opacity:0.62"></div><div style="position:absolute;left:1796px;top:342px;width:6px;height:2px;background:#9cdcfe;opacity:0.62"></div><div style="position:absolute;left:1802px;top:342px;width:1px;height:2px;background:#cccccc;opacity:0.62"></div><div style="position:absolute;left:1804px;top:342px;width:9px;height:2px;background:#ce9178;opacity:0.62"></div><div style="position:absolute;left:1813px;top:342px;width:1px;height:2px;background:#cccccc;opacity:0.62"></div><div style="position:absolute;left:1796px;top:345px;width:7px;height:2px;background:#9cdcfe;opacity:0.62"></div><div style="position:absolute;left:1803px;top:345px;width:1px;height:2px;background:#cccccc;opacity:0.62"></div><div style="position:absolute;left:1805px;top:345px;width:9px;height:2px;background:#ce9178;opacity:0.62"></div><div style="position:absolute;left:1814px;top:345px;width:1px;height:2px;background:#cccccc;opacity:0.62"></div><div style="position:absolute;left:1796px;top:348px;width:11px;height:2px;background:#9cdcfe;opacity:0.62"></div><div style="position:absolute;left:1807px;top:348px;width:1px;height:2px;background:#cccccc;opacity:0.62"></div><div style="position:absolute;left:1809px;top:348px;width:9px;height:2px;background:#ce9178;opacity:0.62"></div><div style="position:absolute;left:1818px;top:348px;width:1px;height:2px;background:#cccccc;opacity:0.62"></div><div style="position:absolute;left:1796px;top:351px;width:10px;height:2px;background:#9cdcfe;opacity:0.62"></div><div style="position:absolute;left:1806px;top:351px;width:1px;height:2px;background:#cccccc;opacity:0.62"></div><div style="position:absolute;left:1808px;top:351px;width:9px;height:2px;background:#ce9178;opacity:0.62"></div><div style="position:absolute;left:1817px;top:351px;width:1px;height:2px;background:#cccccc;opacity:0.62"></div><div style="position:absolute;left:1796px;top:354px;width:11px;height:2px;background:#9cdcfe;opacity:0.62"></div><div style="position:absolute;left:1807px;top:354px;width:1px;height:2px;background:#cccccc;opacity:0.62"></div><div style="position:absolute;left:1809px;top:354px;width:9px;height:2px;background:#ce9178;opacity:0.62"></div><div style="position:absolute;left:1818px;top:354px;width:1px;height:2px;background:#cccccc;opacity:0.62"></div><div style="position:absolute;left:1796px;top:357px;width:8px;height:2px;background:#9cdcfe;opacity:0.62"></div><div style="position:absolute;left:1804px;top:357px;width:1px;height:2px;background:#cccccc;opacity:0.62"></div><div style="position:absolute;left:1806px;top:357px;width:9px;height:2px;background:#ce9178;opacity:0.62"></div><div style="position:absolute;left:1815px;top:357px;width:1px;height:2px;background:#cccccc;opacity:0.62"></div><div style="position:absolute;left:1794px;top:360px;width:2px;height:2px;background:#cccccc;opacity:0.62"></div><div style="position:absolute;left:1794px;top:381px;width:8px;height:2px;background:#6a9955;opacity:0.62"></div><div style="position:absolute;left:1803px;top:381px;width:7px;height:2px;background:#6a9955;opacity:0.62"></div><div style="position:absolute;left:1811px;top:381px;width:10px;height:2px;background:#6a9955;opacity:0.62"></div><div style="position:absolute;left:1906px;top:98px;width:1px;height:819px;background:#141414"></div><div style="position:absolute;left:1906px;top:371px;width:1px;height:257px;background:#3d3d3d"></div><div class="rb" style="left:423px;top:120px;width:1018px;height:764px"></div><div style="position:absolute;left:1188px;top:449px;font-family:'Liberation Serif',serif;font-size:26px;color:#ee2a14;white-space:pre">All Default Colors</div><div style="position:absolute;left:0;top:917px;width:1907px;height:1px;background:#2b2b2b"></div><div style="position:absolute;left:0;top:918px;width:1907px;height:1px;background:#181818"></div><div style="position:absolute;left:0;top:918px;width:34px;height:1px;background:#0078d4"></div><div style="position:absolute;left:1804px;top:918px;width:79px;height:1px;background:#c42b1c"></div></body></html>
